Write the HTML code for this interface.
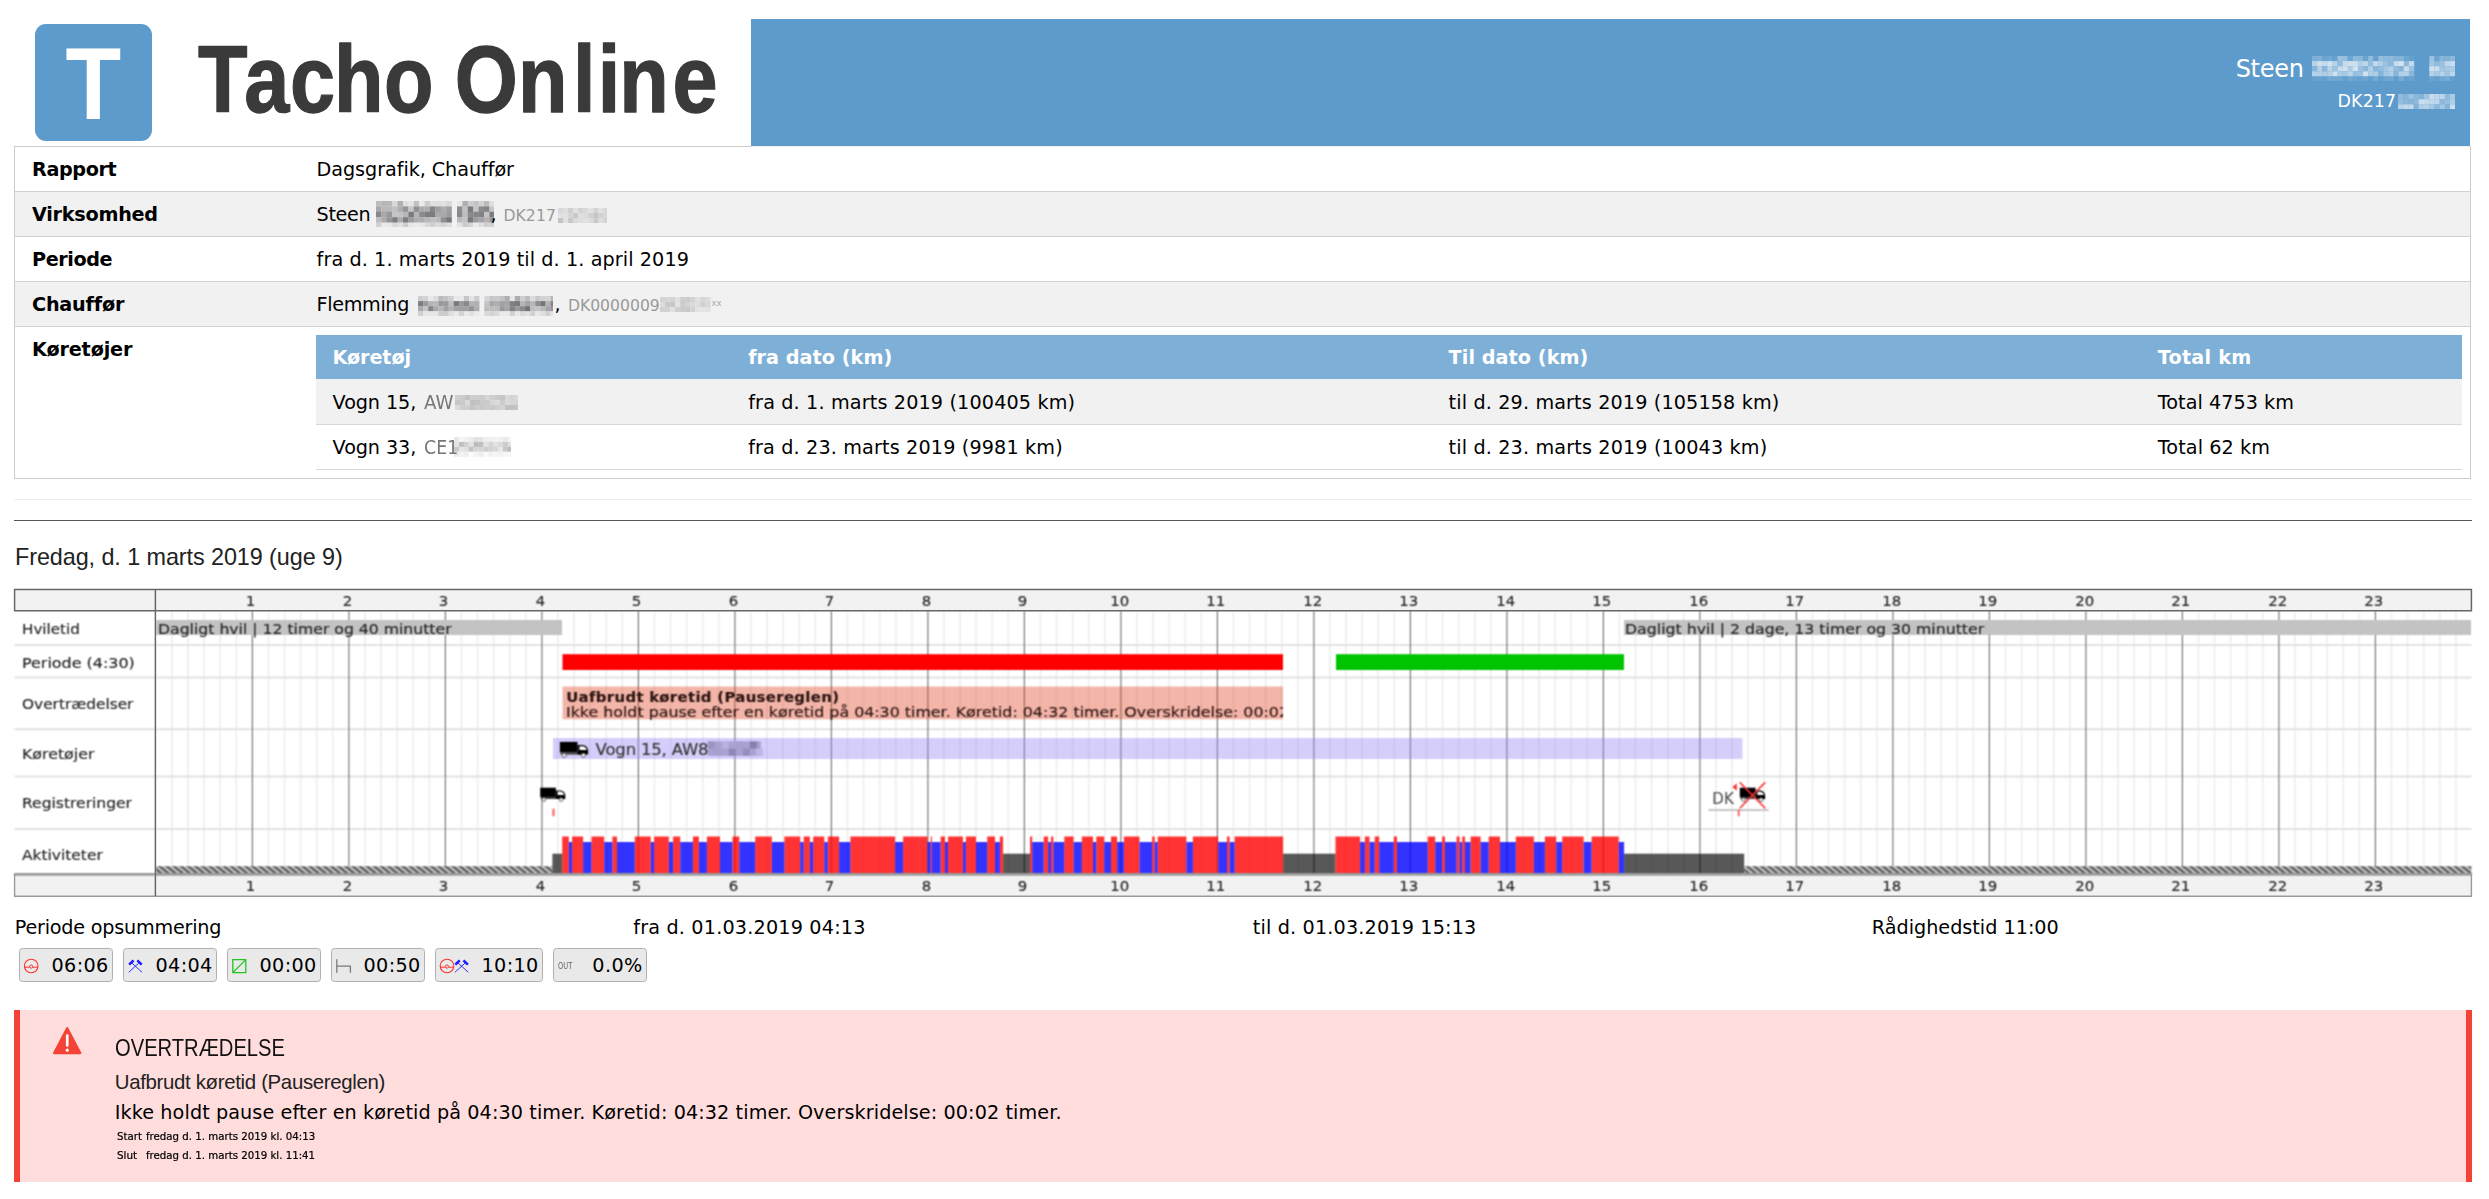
<!DOCTYPE html>
<html lang="da"><head><meta charset="utf-8"><title>Tacho Online – Dagsgrafik, Chauffør</title>
<style>
html,body{margin:0;padding:0;background:#fff}
body{width:2489px;height:1199px;position:relative;overflow:hidden;font-family:"DejaVu Sans","Liberation Sans",sans-serif}
body div,body svg{box-sizing:content-box}
i{display:block;font-style:normal}
</style></head><body>
<!-- ============ header ============ -->
<div style="position:absolute;left:35px;top:24px;width:117px;height:117px;border-radius:11px;background:#5c9bcc"></div>
<svg style="position:absolute;left:0;top:0" width="760" height="146" viewBox="0 0 760 146">
<text x="0" y="0" font-family="Liberation Sans, DejaVu Sans, sans-serif" font-weight="bold" font-size="101.6" fill="#fff" transform="translate(65.6 119.2) scale(0.897 1)">T</text>
<g font-family="Liberation Sans, DejaVu Sans, sans-serif" font-weight="bold" font-size="94.3" fill="#3a3a3a" stroke="#3a3a3a" stroke-width="1.3" stroke-linejoin="round">
<text transform="translate(0 111.6) scale(0.86 1)" x="230.2 284.0 337.2 388.4 446.5" y="0">Tacho</text>
<text transform="translate(0 111.6) scale(0.86 1)" x="528.8 602.3 666.3 695.1 720.2 782.1" y="0">Online</text>
</g></svg>
<div style="position:absolute;left:751px;top:19px;width:1719px;height:127px;background:#5c9bcc"></div>
<svg style="position:absolute;left:2311.5px;top:55.5px;filter:blur(0.5px)" width="143" height="25.5" viewBox="0 0 143 25.5"><rect x="0.0" y="0.0" width="5.3" height="5.3" fill="#7dafd6"/><rect x="5.1" y="0.0" width="5.3" height="5.3" fill="#82b2d8"/><rect x="10.2" y="0.0" width="5.3" height="5.3" fill="#6ba4d1"/><rect x="15.3" y="0.0" width="5.3" height="5.3" fill="#73a9d3"/><rect x="20.4" y="0.0" width="5.3" height="5.3" fill="#66a1cf"/><rect x="25.5" y="0.0" width="5.3" height="5.3" fill="#9cc2e0"/><rect x="30.6" y="0.0" width="5.3" height="5.3" fill="#96bede"/><rect x="35.7" y="0.0" width="5.3" height="5.3" fill="#6ba4d1"/><rect x="40.8" y="0.0" width="5.3" height="5.3" fill="#8db9db"/><rect x="45.9" y="0.0" width="5.3" height="5.3" fill="#89b6da"/><rect x="51.0" y="0.0" width="5.3" height="5.3" fill="#6ba4d1"/><rect x="56.1" y="0.0" width="5.3" height="5.3" fill="#92bcdd"/><rect x="61.2" y="0.0" width="5.3" height="5.3" fill="#67a1cf"/><rect x="66.3" y="0.0" width="5.3" height="5.3" fill="#97bfde"/><rect x="71.4" y="0.0" width="5.3" height="5.3" fill="#91bbdd"/><rect x="76.5" y="0.0" width="5.3" height="5.3" fill="#91bbdc"/><rect x="81.6" y="0.0" width="5.3" height="5.3" fill="#83b3d8"/><rect x="86.7" y="0.0" width="5.3" height="5.3" fill="#85b4d9"/><rect x="91.8" y="0.0" width="5.3" height="5.3" fill="#6ea6d2"/><rect x="96.9" y="0.0" width="5.3" height="5.3" fill="#64a0cf"/><rect x="117.3" y="0.0" width="5.3" height="5.3" fill="#9bc2e0"/><rect x="122.4" y="0.0" width="5.3" height="5.3" fill="#6ba4d1"/><rect x="127.5" y="0.0" width="5.3" height="5.3" fill="#88b6da"/><rect x="132.6" y="0.0" width="5.3" height="5.3" fill="#81b2d8"/><rect x="137.7" y="0.0" width="5.3" height="5.3" fill="#8bb8db"/><rect x="0.0" y="5.1" width="5.3" height="5.3" fill="#b9d4e9"/><rect x="5.1" y="5.1" width="5.3" height="5.3" fill="#cce0ef"/><rect x="10.2" y="5.1" width="5.3" height="5.3" fill="#c6dced"/><rect x="15.3" y="5.1" width="5.3" height="5.3" fill="#d1e3f1"/><rect x="20.4" y="5.1" width="5.3" height="5.3" fill="#b8d4e9"/><rect x="25.5" y="5.1" width="5.3" height="5.3" fill="#92bcdd"/><rect x="30.6" y="5.1" width="5.3" height="5.3" fill="#c7dced"/><rect x="35.7" y="5.1" width="5.3" height="5.3" fill="#cfe1f0"/><rect x="40.8" y="5.1" width="5.3" height="5.3" fill="#cadfee"/><rect x="45.9" y="5.1" width="5.3" height="5.3" fill="#b0cfe6"/><rect x="51.0" y="5.1" width="5.3" height="5.3" fill="#bcd6ea"/><rect x="56.1" y="5.1" width="5.3" height="5.3" fill="#95bede"/><rect x="61.2" y="5.1" width="5.3" height="5.3" fill="#c5dbed"/><rect x="66.3" y="5.1" width="5.3" height="5.3" fill="#b1cfe7"/><rect x="71.4" y="5.1" width="5.3" height="5.3" fill="#9bc2e0"/><rect x="76.5" y="5.1" width="5.3" height="5.3" fill="#8ab7da"/><rect x="81.6" y="5.1" width="5.3" height="5.3" fill="#c6dced"/><rect x="86.7" y="5.1" width="5.3" height="5.3" fill="#d1e3f0"/><rect x="91.8" y="5.1" width="5.3" height="5.3" fill="#8cb8db"/><rect x="96.9" y="5.1" width="5.3" height="5.3" fill="#c2daec"/><rect x="117.3" y="5.1" width="5.3" height="5.3" fill="#a4c7e3"/><rect x="122.4" y="5.1" width="5.3" height="5.3" fill="#91bbdc"/><rect x="127.5" y="5.1" width="5.3" height="5.3" fill="#9bc2e0"/><rect x="132.6" y="5.1" width="5.3" height="5.3" fill="#c0d8eb"/><rect x="137.7" y="5.1" width="5.3" height="5.3" fill="#c8ddee"/><rect x="0.0" y="10.2" width="5.3" height="5.3" fill="#88b6da"/><rect x="5.1" y="10.2" width="5.3" height="5.3" fill="#b4d1e8"/><rect x="10.2" y="10.2" width="5.3" height="5.3" fill="#89b6da"/><rect x="15.3" y="10.2" width="5.3" height="5.3" fill="#bcd6ea"/><rect x="20.4" y="10.2" width="5.3" height="5.3" fill="#9ec4e1"/><rect x="25.5" y="10.2" width="5.3" height="5.3" fill="#c8ddee"/><rect x="30.6" y="10.2" width="5.3" height="5.3" fill="#d0e2f0"/><rect x="35.7" y="10.2" width="5.3" height="5.3" fill="#accce5"/><rect x="40.8" y="10.2" width="5.3" height="5.3" fill="#d1e3f1"/><rect x="45.9" y="10.2" width="5.3" height="5.3" fill="#9dc3e0"/><rect x="51.0" y="10.2" width="5.3" height="5.3" fill="#8bb8db"/><rect x="56.1" y="10.2" width="5.3" height="5.3" fill="#b3d0e7"/><rect x="61.2" y="10.2" width="5.3" height="5.3" fill="#87b6da"/><rect x="66.3" y="10.2" width="5.3" height="5.3" fill="#94bdde"/><rect x="71.4" y="10.2" width="5.3" height="5.3" fill="#a4c7e3"/><rect x="76.5" y="10.2" width="5.3" height="5.3" fill="#b4d1e7"/><rect x="81.6" y="10.2" width="5.3" height="5.3" fill="#91bcdd"/><rect x="86.7" y="10.2" width="5.3" height="5.3" fill="#88b6da"/><rect x="91.8" y="10.2" width="5.3" height="5.3" fill="#c7ddee"/><rect x="96.9" y="10.2" width="5.3" height="5.3" fill="#9dc3e0"/><rect x="117.3" y="10.2" width="5.3" height="5.3" fill="#cee1f0"/><rect x="122.4" y="10.2" width="5.3" height="5.3" fill="#c9deee"/><rect x="127.5" y="10.2" width="5.3" height="5.3" fill="#a2c6e2"/><rect x="132.6" y="10.2" width="5.3" height="5.3" fill="#a8cae4"/><rect x="137.7" y="10.2" width="5.3" height="5.3" fill="#adcde5"/><rect x="0.0" y="15.3" width="5.3" height="5.3" fill="#b6d2e8"/><rect x="5.1" y="15.3" width="5.3" height="5.3" fill="#b3d0e7"/><rect x="10.2" y="15.3" width="5.3" height="5.3" fill="#b0cee6"/><rect x="15.3" y="15.3" width="5.3" height="5.3" fill="#b4d1e8"/><rect x="20.4" y="15.3" width="5.3" height="5.3" fill="#cde0ef"/><rect x="25.5" y="15.3" width="5.3" height="5.3" fill="#accce5"/><rect x="30.6" y="15.3" width="5.3" height="5.3" fill="#a6c8e3"/><rect x="35.7" y="15.3" width="5.3" height="5.3" fill="#bcd6ea"/><rect x="40.8" y="15.3" width="5.3" height="5.3" fill="#97bfdf"/><rect x="45.9" y="15.3" width="5.3" height="5.3" fill="#9cc2e0"/><rect x="51.0" y="15.3" width="5.3" height="5.3" fill="#d0e2f0"/><rect x="56.1" y="15.3" width="5.3" height="5.3" fill="#adcde5"/><rect x="61.2" y="15.3" width="5.3" height="5.3" fill="#afcee6"/><rect x="66.3" y="15.3" width="5.3" height="5.3" fill="#86b5d9"/><rect x="71.4" y="15.3" width="5.3" height="5.3" fill="#a5c8e3"/><rect x="76.5" y="15.3" width="5.3" height="5.3" fill="#b1cfe7"/><rect x="81.6" y="15.3" width="5.3" height="5.3" fill="#87b5d9"/><rect x="86.7" y="15.3" width="5.3" height="5.3" fill="#b4d1e8"/><rect x="91.8" y="15.3" width="5.3" height="5.3" fill="#b5d2e8"/><rect x="96.9" y="15.3" width="5.3" height="5.3" fill="#8ab7da"/><rect x="117.3" y="15.3" width="5.3" height="5.3" fill="#b5d2e8"/><rect x="122.4" y="15.3" width="5.3" height="5.3" fill="#a9cae4"/><rect x="127.5" y="15.3" width="5.3" height="5.3" fill="#b9d4e9"/><rect x="132.6" y="15.3" width="5.3" height="5.3" fill="#a0c5e1"/><rect x="137.7" y="15.3" width="5.3" height="5.3" fill="#bbd5ea"/><rect x="0.0" y="20.4" width="5.3" height="5.3" fill="#65a0cf"/><rect x="5.1" y="20.4" width="5.3" height="5.3" fill="#6aa3d0"/><rect x="10.2" y="20.4" width="5.3" height="5.3" fill="#66a1cf"/><rect x="15.3" y="20.4" width="5.3" height="5.3" fill="#73a9d3"/><rect x="20.4" y="20.4" width="5.3" height="5.3" fill="#70a7d2"/><rect x="25.5" y="20.4" width="5.3" height="5.3" fill="#6fa7d2"/><rect x="30.6" y="20.4" width="5.3" height="5.3" fill="#64a0ce"/><rect x="35.7" y="20.4" width="5.3" height="5.3" fill="#71a8d3"/><rect x="40.8" y="20.4" width="5.3" height="5.3" fill="#69a3d0"/><rect x="45.9" y="20.4" width="5.3" height="5.3" fill="#65a0cf"/><rect x="51.0" y="20.4" width="5.3" height="5.3" fill="#6da6d1"/><rect x="56.1" y="20.4" width="5.3" height="5.3" fill="#619ece"/><rect x="61.2" y="20.4" width="5.3" height="5.3" fill="#72a9d3"/><rect x="66.3" y="20.4" width="5.3" height="5.3" fill="#609ecd"/><rect x="71.4" y="20.4" width="5.3" height="5.3" fill="#70a7d2"/><rect x="76.5" y="20.4" width="5.3" height="5.3" fill="#72a9d3"/><rect x="81.6" y="20.4" width="5.3" height="5.3" fill="#619ece"/><rect x="86.7" y="20.4" width="5.3" height="5.3" fill="#77acd5"/><rect x="91.8" y="20.4" width="5.3" height="5.3" fill="#639fce"/><rect x="96.9" y="20.4" width="5.3" height="5.3" fill="#6ba4d1"/><rect x="117.3" y="20.4" width="5.3" height="5.3" fill="#6da5d1"/><rect x="122.4" y="20.4" width="5.3" height="5.3" fill="#65a1cf"/><rect x="127.5" y="20.4" width="5.3" height="5.3" fill="#6fa6d2"/><rect x="132.6" y="20.4" width="5.3" height="5.3" fill="#77acd4"/><rect x="137.7" y="20.4" width="5.3" height="5.3" fill="#629fce"/></svg>
<svg style="position:absolute;left:2397.5px;top:93.6px;filter:blur(0.5px)" width="57.5" height="15.6" viewBox="0 0 57.5 15.6"><rect x="0.0" y="0.0" width="5.4" height="5.4" fill="#91bcdd"/><rect x="5.2" y="0.0" width="5.4" height="5.4" fill="#86b5d9"/><rect x="10.4" y="0.0" width="5.4" height="5.4" fill="#9ec3e1"/><rect x="15.6" y="0.0" width="5.4" height="5.4" fill="#8bb8db"/><rect x="20.8" y="0.0" width="5.4" height="5.4" fill="#84b3d8"/><rect x="26.0" y="0.0" width="5.4" height="5.4" fill="#9ec4e1"/><rect x="31.2" y="0.0" width="5.4" height="5.4" fill="#c8ddee"/><rect x="36.4" y="0.0" width="5.4" height="5.4" fill="#bed7eb"/><rect x="41.6" y="0.0" width="5.4" height="5.4" fill="#bbd5ea"/><rect x="46.8" y="0.0" width="5.4" height="5.4" fill="#90bbdc"/><rect x="52.0" y="0.0" width="5.4" height="5.4" fill="#a9cae4"/><rect x="0.0" y="5.2" width="5.4" height="5.4" fill="#94bede"/><rect x="5.2" y="5.2" width="5.4" height="5.4" fill="#8cb8db"/><rect x="10.4" y="5.2" width="5.4" height="5.4" fill="#87b5d9"/><rect x="15.6" y="5.2" width="5.4" height="5.4" fill="#8fbbdc"/><rect x="20.8" y="5.2" width="5.4" height="5.4" fill="#c8ddee"/><rect x="26.0" y="5.2" width="5.4" height="5.4" fill="#c0d9eb"/><rect x="31.2" y="5.2" width="5.4" height="5.4" fill="#bfd8eb"/><rect x="36.4" y="5.2" width="5.4" height="5.4" fill="#bed7eb"/><rect x="41.6" y="5.2" width="5.4" height="5.4" fill="#8eb9dc"/><rect x="46.8" y="5.2" width="5.4" height="5.4" fill="#97bfde"/><rect x="52.0" y="5.2" width="5.4" height="5.4" fill="#b0cfe6"/><rect x="0.0" y="10.4" width="5.4" height="5.4" fill="#b9d4e9"/><rect x="5.2" y="10.4" width="5.4" height="5.4" fill="#c2daec"/><rect x="10.4" y="10.4" width="5.4" height="5.4" fill="#c5dbed"/><rect x="15.6" y="10.4" width="5.4" height="5.4" fill="#85b4d9"/><rect x="20.8" y="10.4" width="5.4" height="5.4" fill="#afcee6"/><rect x="26.0" y="10.4" width="5.4" height="5.4" fill="#b4d1e7"/><rect x="31.2" y="10.4" width="5.4" height="5.4" fill="#a7c9e3"/><rect x="36.4" y="10.4" width="5.4" height="5.4" fill="#8cb9db"/><rect x="41.6" y="10.4" width="5.4" height="5.4" fill="#a4c7e3"/><rect x="46.8" y="10.4" width="5.4" height="5.4" fill="#85b4d9"/><rect x="52.0" y="10.4" width="5.4" height="5.4" fill="#c9deee"/></svg>
<!-- ============ info table ============ -->
<div style="position:absolute;left:14px;top:146px;width:2455px;height:331px;border:1px solid #ccc;background:#fff"></div>
<div style="position:absolute;left:751px;top:146px;width:1719px;height:1px;background:#f4efec"></div>
<div style="position:absolute;left:15px;top:192px;width:2455px;height:44px;background:#f1f1f1"></div>
<div style="position:absolute;left:15px;top:282px;width:2455px;height:44px;background:#f1f1f1"></div>
<div style="position:absolute;left:15px;top:191px;width:2455px;height:1px;background:#d2d2d2"></div>
<div style="position:absolute;left:15px;top:236px;width:2455px;height:1px;background:#d2d2d2"></div>
<div style="position:absolute;left:15px;top:281px;width:2455px;height:1px;background:#d2d2d2"></div>
<div style="position:absolute;left:15px;top:326px;width:2455px;height:1px;background:#d2d2d2"></div>
<div style="position:absolute;left:316px;top:335px;width:2146px;height:44px;background:#7dafd7"></div>
<div style="position:absolute;left:316px;top:379px;width:2146px;height:45px;background:#f1f1f1;border-bottom:1px solid #d8d8d8"></div>
<div style="position:absolute;left:316px;top:425px;width:2146px;height:44px;background:#fff;border-bottom:1px solid #d8d8d8"></div>
<svg style="position:absolute;left:376px;top:201px;filter:blur(0.5px)" width="118" height="26" viewBox="0 0 118 26"><rect x="0.0" y="0.0" width="5.6" height="5.6" fill="#bebec0"/><rect x="5.4" y="0.0" width="5.6" height="5.6" fill="#b6b6b9"/><rect x="10.8" y="0.0" width="5.6" height="5.6" fill="#b9b9bb"/><rect x="16.2" y="0.0" width="5.6" height="5.6" fill="#d8d8d9"/><rect x="21.6" y="0.0" width="5.6" height="5.6" fill="#b0b0b3"/><rect x="27.0" y="0.0" width="5.6" height="5.6" fill="#dededf"/><rect x="32.4" y="0.0" width="5.6" height="5.6" fill="#e4e4e4"/><rect x="37.8" y="0.0" width="5.6" height="5.6" fill="#c1c1c4"/><rect x="43.2" y="0.0" width="5.6" height="5.6" fill="#eaeaea"/><rect x="48.6" y="0.0" width="5.6" height="5.6" fill="#cdcdcf"/><rect x="54.0" y="0.0" width="5.6" height="5.6" fill="#e0e0e1"/><rect x="59.4" y="0.0" width="5.6" height="5.6" fill="#dfdfe0"/><rect x="64.8" y="0.0" width="5.6" height="5.6" fill="#e2e2e2"/><rect x="70.2" y="0.0" width="5.6" height="5.6" fill="#d9d9da"/><rect x="81.0" y="0.0" width="5.6" height="5.6" fill="#e7e7e8"/><rect x="86.4" y="0.0" width="5.6" height="5.6" fill="#aeaeb1"/><rect x="91.8" y="0.0" width="5.6" height="5.6" fill="#cdcdce"/><rect x="97.2" y="0.0" width="5.6" height="5.6" fill="#c2c2c4"/><rect x="102.6" y="0.0" width="5.6" height="5.6" fill="#d0d0d2"/><rect x="108.0" y="0.0" width="5.6" height="5.6" fill="#bbbbbd"/><rect x="113.4" y="0.0" width="5.6" height="5.6" fill="#dededf"/><rect x="0.0" y="5.4" width="5.6" height="5.6" fill="#a9a9ac"/><rect x="5.4" y="5.4" width="5.6" height="5.6" fill="#b9b9bb"/><rect x="10.8" y="5.4" width="5.6" height="5.6" fill="#bababd"/><rect x="16.2" y="5.4" width="5.6" height="5.6" fill="#c1c1c3"/><rect x="21.6" y="5.4" width="5.6" height="5.6" fill="#aeaeb1"/><rect x="27.0" y="5.4" width="5.6" height="5.6" fill="#96969a"/><rect x="32.4" y="5.4" width="5.6" height="5.6" fill="#c6c6c8"/><rect x="37.8" y="5.4" width="5.6" height="5.6" fill="#909094"/><rect x="43.2" y="5.4" width="5.6" height="5.6" fill="#ababae"/><rect x="48.6" y="5.4" width="5.6" height="5.6" fill="#adadb0"/><rect x="54.0" y="5.4" width="5.6" height="5.6" fill="#848489"/><rect x="59.4" y="5.4" width="5.6" height="5.6" fill="#9f9fa3"/><rect x="64.8" y="5.4" width="5.6" height="5.6" fill="#adadb0"/><rect x="70.2" y="5.4" width="5.6" height="5.6" fill="#9f9fa3"/><rect x="81.0" y="5.4" width="5.6" height="5.6" fill="#8e8e92"/><rect x="86.4" y="5.4" width="5.6" height="5.6" fill="#c1c1c4"/><rect x="91.8" y="5.4" width="5.6" height="5.6" fill="#78787e"/><rect x="97.2" y="5.4" width="5.6" height="5.6" fill="#c4c4c6"/><rect x="102.6" y="5.4" width="5.6" height="5.6" fill="#8a8a8f"/><rect x="108.0" y="5.4" width="5.6" height="5.6" fill="#828287"/><rect x="113.4" y="5.4" width="5.6" height="5.6" fill="#c4c4c7"/><rect x="0.0" y="10.8" width="5.6" height="5.6" fill="#87878c"/><rect x="5.4" y="10.8" width="5.6" height="5.6" fill="#a9a9ac"/><rect x="10.8" y="10.8" width="5.6" height="5.6" fill="#98989c"/><rect x="16.2" y="10.8" width="5.6" height="5.6" fill="#c5c5c7"/><rect x="21.6" y="10.8" width="5.6" height="5.6" fill="#c2c2c4"/><rect x="27.0" y="10.8" width="5.6" height="5.6" fill="#b7b7ba"/><rect x="32.4" y="10.8" width="5.6" height="5.6" fill="#79797f"/><rect x="37.8" y="10.8" width="5.6" height="5.6" fill="#b6b6b9"/><rect x="43.2" y="10.8" width="5.6" height="5.6" fill="#89898e"/><rect x="48.6" y="10.8" width="5.6" height="5.6" fill="#7c7c81"/><rect x="54.0" y="10.8" width="5.6" height="5.6" fill="#7b7b80"/><rect x="59.4" y="10.8" width="5.6" height="5.6" fill="#aaaaae"/><rect x="64.8" y="10.8" width="5.6" height="5.6" fill="#aaaaad"/><rect x="70.2" y="10.8" width="5.6" height="5.6" fill="#9c9ca0"/><rect x="81.0" y="10.8" width="5.6" height="5.6" fill="#88888d"/><rect x="86.4" y="10.8" width="5.6" height="5.6" fill="#bdbdc0"/><rect x="91.8" y="10.8" width="5.6" height="5.6" fill="#8a8a8f"/><rect x="97.2" y="10.8" width="5.6" height="5.6" fill="#86868b"/><rect x="102.6" y="10.8" width="5.6" height="5.6" fill="#818186"/><rect x="108.0" y="10.8" width="5.6" height="5.6" fill="#c3c3c5"/><rect x="113.4" y="10.8" width="5.6" height="5.6" fill="#7a7a80"/><rect x="0.0" y="16.2" width="5.6" height="5.6" fill="#bfbfc1"/><rect x="5.4" y="16.2" width="5.6" height="5.6" fill="#ababae"/><rect x="10.8" y="16.2" width="5.6" height="5.6" fill="#959599"/><rect x="16.2" y="16.2" width="5.6" height="5.6" fill="#7c7c82"/><rect x="21.6" y="16.2" width="5.6" height="5.6" fill="#ababae"/><rect x="27.0" y="16.2" width="5.6" height="5.6" fill="#7c7c81"/><rect x="32.4" y="16.2" width="5.6" height="5.6" fill="#9a9a9e"/><rect x="37.8" y="16.2" width="5.6" height="5.6" fill="#adadb0"/><rect x="43.2" y="16.2" width="5.6" height="5.6" fill="#adadb0"/><rect x="48.6" y="16.2" width="5.6" height="5.6" fill="#b8b8ba"/><rect x="54.0" y="16.2" width="5.6" height="5.6" fill="#c0c0c2"/><rect x="59.4" y="16.2" width="5.6" height="5.6" fill="#bababd"/><rect x="64.8" y="16.2" width="5.6" height="5.6" fill="#8f8f93"/><rect x="70.2" y="16.2" width="5.6" height="5.6" fill="#76767c"/><rect x="81.0" y="16.2" width="5.6" height="5.6" fill="#b9b9bc"/><rect x="86.4" y="16.2" width="5.6" height="5.6" fill="#c2c2c4"/><rect x="91.8" y="16.2" width="5.6" height="5.6" fill="#77777d"/><rect x="97.2" y="16.2" width="5.6" height="5.6" fill="#9b9b9f"/><rect x="102.6" y="16.2" width="5.6" height="5.6" fill="#a5a5a9"/><rect x="108.0" y="16.2" width="5.6" height="5.6" fill="#b3b3b6"/><rect x="113.4" y="16.2" width="5.6" height="5.6" fill="#96969b"/><rect x="0.0" y="21.6" width="5.6" height="5.6" fill="#d0d0d2"/><rect x="5.4" y="21.6" width="5.6" height="5.6" fill="#eaeaea"/><rect x="10.8" y="21.6" width="5.6" height="5.6" fill="#e7e7e7"/><rect x="16.2" y="21.6" width="5.6" height="5.6" fill="#d8d8d9"/><rect x="21.6" y="21.6" width="5.6" height="5.6" fill="#e1e1e2"/><rect x="27.0" y="21.6" width="5.6" height="5.6" fill="#cdcdcf"/><rect x="32.4" y="21.6" width="5.6" height="5.6" fill="#e7e7e8"/><rect x="37.8" y="21.6" width="5.6" height="5.6" fill="#eaeaea"/><rect x="43.2" y="21.6" width="5.6" height="5.6" fill="#e7e7e8"/><rect x="48.6" y="21.6" width="5.6" height="5.6" fill="#d9d9da"/><rect x="54.0" y="21.6" width="5.6" height="5.6" fill="#d0d0d1"/><rect x="59.4" y="21.6" width="5.6" height="5.6" fill="#d9d9da"/><rect x="64.8" y="21.6" width="5.6" height="5.6" fill="#d3d3d4"/><rect x="70.2" y="21.6" width="5.6" height="5.6" fill="#ddddde"/><rect x="81.0" y="21.6" width="5.6" height="5.6" fill="#e1e1e1"/><rect x="86.4" y="21.6" width="5.6" height="5.6" fill="#ccccce"/><rect x="91.8" y="21.6" width="5.6" height="5.6" fill="#d5d5d6"/><rect x="97.2" y="21.6" width="5.6" height="5.6" fill="#ebebeb"/><rect x="102.6" y="21.6" width="5.6" height="5.6" fill="#dedede"/><rect x="108.0" y="21.6" width="5.6" height="5.6" fill="#cfcfd1"/><rect x="113.4" y="21.6" width="5.6" height="5.6" fill="#d1d1d3"/></svg>
<svg style="position:absolute;left:557.6px;top:207.8px;filter:blur(0.5px)" width="49.4" height="15.2" viewBox="0 0 49.4 15.2"><rect x="0.0" y="0.0" width="5.2" height="5.2" fill="#d9d9d9"/><rect x="5.0" y="0.0" width="5.2" height="5.2" fill="#dfdfdf"/><rect x="10.1" y="0.0" width="5.2" height="5.2" fill="#cfcfcf"/><rect x="15.1" y="0.0" width="5.2" height="5.2" fill="#e1e1e1"/><rect x="20.2" y="0.0" width="5.2" height="5.2" fill="#d2d2d2"/><rect x="25.2" y="0.0" width="5.2" height="5.2" fill="#d8d8d8"/><rect x="30.3" y="0.0" width="5.2" height="5.2" fill="#e2e2e2"/><rect x="35.4" y="0.0" width="5.2" height="5.2" fill="#d3d3d3"/><rect x="40.4" y="0.0" width="5.2" height="5.2" fill="#e2e2e2"/><rect x="45.4" y="0.0" width="5.2" height="5.2" fill="#d6d6d6"/><rect x="0.0" y="5.0" width="5.2" height="5.2" fill="#e1e1e1"/><rect x="5.0" y="5.0" width="5.2" height="5.2" fill="#e0e0e0"/><rect x="10.1" y="5.0" width="5.2" height="5.2" fill="#d6d6d6"/><rect x="15.1" y="5.0" width="5.2" height="5.2" fill="#c9c9c9"/><rect x="20.2" y="5.0" width="5.2" height="5.2" fill="#dfdfdf"/><rect x="25.2" y="5.0" width="5.2" height="5.2" fill="#dcdcdc"/><rect x="30.3" y="5.0" width="5.2" height="5.2" fill="#cfcfcf"/><rect x="35.4" y="5.0" width="5.2" height="5.2" fill="#c5c5c5"/><rect x="40.4" y="5.0" width="5.2" height="5.2" fill="#d1d1d1"/><rect x="45.4" y="5.0" width="5.2" height="5.2" fill="#d7d7d7"/><rect x="0.0" y="10.1" width="5.2" height="5.2" fill="#c4c4c4"/><rect x="5.0" y="10.1" width="5.2" height="5.2" fill="#e2e2e2"/><rect x="10.1" y="10.1" width="5.2" height="5.2" fill="#c8c8c8"/><rect x="15.1" y="10.1" width="5.2" height="5.2" fill="#dadada"/><rect x="20.2" y="10.1" width="5.2" height="5.2" fill="#dfdfdf"/><rect x="25.2" y="10.1" width="5.2" height="5.2" fill="#e0e0e0"/><rect x="30.3" y="10.1" width="5.2" height="5.2" fill="#dadada"/><rect x="35.4" y="10.1" width="5.2" height="5.2" fill="#c9c9c9"/><rect x="40.4" y="10.1" width="5.2" height="5.2" fill="#dedede"/><rect x="45.4" y="10.1" width="5.2" height="5.2" fill="#d1d1d1"/><rect x="0.0" y="15.1" width="5.2" height="5.2" fill="#cfcfcf"/><rect x="5.0" y="15.1" width="5.2" height="5.2" fill="#d7d7d7"/><rect x="10.1" y="15.1" width="5.2" height="5.2" fill="#d2d2d2"/><rect x="15.1" y="15.1" width="5.2" height="5.2" fill="#e1e1e1"/><rect x="20.2" y="15.1" width="5.2" height="5.2" fill="#e1e1e1"/><rect x="25.2" y="15.1" width="5.2" height="5.2" fill="#dddddd"/><rect x="30.3" y="15.1" width="5.2" height="5.2" fill="#cecece"/><rect x="35.4" y="15.1" width="5.2" height="5.2" fill="#d6d6d6"/><rect x="40.4" y="15.1" width="5.2" height="5.2" fill="#d9d9d9"/><rect x="45.4" y="15.1" width="5.2" height="5.2" fill="#d1d1d1"/></svg>
<svg style="position:absolute;left:418px;top:295.6px;filter:blur(0.5px)" width="135.4" height="20.4" viewBox="0 0 135.4 20.4"><rect x="0.0" y="0.0" width="5.3" height="5.3" fill="#ceced0"/><rect x="5.1" y="0.0" width="5.3" height="5.3" fill="#d3d3d4"/><rect x="10.2" y="0.0" width="5.3" height="5.3" fill="#e8e8e9"/><rect x="15.3" y="0.0" width="5.3" height="5.3" fill="#dcdcdd"/><rect x="20.4" y="0.0" width="5.3" height="5.3" fill="#bbbbbd"/><rect x="25.5" y="0.0" width="5.3" height="5.3" fill="#c4c4c6"/><rect x="30.6" y="0.0" width="5.3" height="5.3" fill="#cfcfd1"/><rect x="35.7" y="0.0" width="5.3" height="5.3" fill="#e8e8e9"/><rect x="40.8" y="0.0" width="5.3" height="5.3" fill="#e9e9ea"/><rect x="45.9" y="0.0" width="5.3" height="5.3" fill="#c6c6c8"/><rect x="51.0" y="0.0" width="5.3" height="5.3" fill="#e4e4e5"/><rect x="56.1" y="0.0" width="5.3" height="5.3" fill="#ccccce"/><rect x="66.3" y="0.0" width="5.3" height="5.3" fill="#d5d5d7"/><rect x="71.4" y="0.0" width="5.3" height="5.3" fill="#c7c7c9"/><rect x="76.5" y="0.0" width="5.3" height="5.3" fill="#c9c9cb"/><rect x="81.6" y="0.0" width="5.3" height="5.3" fill="#c1c1c4"/><rect x="86.7" y="0.0" width="5.3" height="5.3" fill="#afafb2"/><rect x="91.8" y="0.0" width="5.3" height="5.3" fill="#e8e8e8"/><rect x="96.9" y="0.0" width="5.3" height="5.3" fill="#adadb0"/><rect x="102.0" y="0.0" width="5.3" height="5.3" fill="#cfcfd1"/><rect x="107.1" y="0.0" width="5.3" height="5.3" fill="#bebec0"/><rect x="112.2" y="0.0" width="5.3" height="5.3" fill="#ddddde"/><rect x="117.3" y="0.0" width="5.3" height="5.3" fill="#c8c8ca"/><rect x="122.4" y="0.0" width="5.3" height="5.3" fill="#d2d2d4"/><rect x="127.5" y="0.0" width="5.3" height="5.3" fill="#d4d4d5"/><rect x="132.6" y="0.0" width="5.3" height="5.3" fill="#b8b8bb"/><rect x="0.0" y="5.1" width="5.3" height="5.3" fill="#7e7e83"/><rect x="5.1" y="5.1" width="5.3" height="5.3" fill="#9a9a9e"/><rect x="10.2" y="5.1" width="5.3" height="5.3" fill="#b4b4b7"/><rect x="15.3" y="5.1" width="5.3" height="5.3" fill="#b8b8ba"/><rect x="20.4" y="5.1" width="5.3" height="5.3" fill="#98989c"/><rect x="25.5" y="5.1" width="5.3" height="5.3" fill="#9a9a9e"/><rect x="30.6" y="5.1" width="5.3" height="5.3" fill="#bebec1"/><rect x="35.7" y="5.1" width="5.3" height="5.3" fill="#79797e"/><rect x="40.8" y="5.1" width="5.3" height="5.3" fill="#9a9a9e"/><rect x="45.9" y="5.1" width="5.3" height="5.3" fill="#8a8a8e"/><rect x="51.0" y="5.1" width="5.3" height="5.3" fill="#b2b2b5"/><rect x="56.1" y="5.1" width="5.3" height="5.3" fill="#b0b0b3"/><rect x="66.3" y="5.1" width="5.3" height="5.3" fill="#c3c3c5"/><rect x="71.4" y="5.1" width="5.3" height="5.3" fill="#a7a7ab"/><rect x="76.5" y="5.1" width="5.3" height="5.3" fill="#aeaeb1"/><rect x="81.6" y="5.1" width="5.3" height="5.3" fill="#a1a1a5"/><rect x="86.7" y="5.1" width="5.3" height="5.3" fill="#a5a5a8"/><rect x="91.8" y="5.1" width="5.3" height="5.3" fill="#7f7f84"/><rect x="96.9" y="5.1" width="5.3" height="5.3" fill="#7a7a7f"/><rect x="102.0" y="5.1" width="5.3" height="5.3" fill="#b6b6b8"/><rect x="107.1" y="5.1" width="5.3" height="5.3" fill="#a3a3a7"/><rect x="112.2" y="5.1" width="5.3" height="5.3" fill="#b6b6b9"/><rect x="117.3" y="5.1" width="5.3" height="5.3" fill="#8d8d92"/><rect x="122.4" y="5.1" width="5.3" height="5.3" fill="#737379"/><rect x="127.5" y="5.1" width="5.3" height="5.3" fill="#b3b3b6"/><rect x="132.6" y="5.1" width="5.3" height="5.3" fill="#848489"/><rect x="0.0" y="10.2" width="5.3" height="5.3" fill="#ababae"/><rect x="5.1" y="10.2" width="5.3" height="5.3" fill="#c3c3c5"/><rect x="10.2" y="10.2" width="5.3" height="5.3" fill="#848489"/><rect x="15.3" y="10.2" width="5.3" height="5.3" fill="#a8a8ab"/><rect x="20.4" y="10.2" width="5.3" height="5.3" fill="#b6b6b9"/><rect x="25.5" y="10.2" width="5.3" height="5.3" fill="#a0a0a4"/><rect x="30.6" y="10.2" width="5.3" height="5.3" fill="#b1b1b4"/><rect x="35.7" y="10.2" width="5.3" height="5.3" fill="#a2a2a6"/><rect x="40.8" y="10.2" width="5.3" height="5.3" fill="#9f9fa3"/><rect x="45.9" y="10.2" width="5.3" height="5.3" fill="#a1a1a5"/><rect x="51.0" y="10.2" width="5.3" height="5.3" fill="#939397"/><rect x="56.1" y="10.2" width="5.3" height="5.3" fill="#acacaf"/><rect x="66.3" y="10.2" width="5.3" height="5.3" fill="#bcbcbf"/><rect x="71.4" y="10.2" width="5.3" height="5.3" fill="#bdbdbf"/><rect x="76.5" y="10.2" width="5.3" height="5.3" fill="#bbbbbe"/><rect x="81.6" y="10.2" width="5.3" height="5.3" fill="#99999d"/><rect x="86.7" y="10.2" width="5.3" height="5.3" fill="#a6a6aa"/><rect x="91.8" y="10.2" width="5.3" height="5.3" fill="#818186"/><rect x="96.9" y="10.2" width="5.3" height="5.3" fill="#9a9a9e"/><rect x="102.0" y="10.2" width="5.3" height="5.3" fill="#89898e"/><rect x="107.1" y="10.2" width="5.3" height="5.3" fill="#727278"/><rect x="112.2" y="10.2" width="5.3" height="5.3" fill="#bfbfc1"/><rect x="117.3" y="10.2" width="5.3" height="5.3" fill="#c3c3c5"/><rect x="122.4" y="10.2" width="5.3" height="5.3" fill="#b8b8bb"/><rect x="127.5" y="10.2" width="5.3" height="5.3" fill="#a4a4a8"/><rect x="132.6" y="10.2" width="5.3" height="5.3" fill="#949499"/><rect x="0.0" y="15.3" width="5.3" height="5.3" fill="#d1d1d2"/><rect x="5.1" y="15.3" width="5.3" height="5.3" fill="#e6e6e6"/><rect x="10.2" y="15.3" width="5.3" height="5.3" fill="#e7e7e7"/><rect x="15.3" y="15.3" width="5.3" height="5.3" fill="#e6e6e7"/><rect x="20.4" y="15.3" width="5.3" height="5.3" fill="#cbcbcd"/><rect x="25.5" y="15.3" width="5.3" height="5.3" fill="#cbcbcd"/><rect x="30.6" y="15.3" width="5.3" height="5.3" fill="#dfdfe0"/><rect x="35.7" y="15.3" width="5.3" height="5.3" fill="#eaeaea"/><rect x="40.8" y="15.3" width="5.3" height="5.3" fill="#d4d4d6"/><rect x="45.9" y="15.3" width="5.3" height="5.3" fill="#e9e9ea"/><rect x="51.0" y="15.3" width="5.3" height="5.3" fill="#e0e0e1"/><rect x="56.1" y="15.3" width="5.3" height="5.3" fill="#eaeaea"/><rect x="66.3" y="15.3" width="5.3" height="5.3" fill="#d9d9da"/><rect x="71.4" y="15.3" width="5.3" height="5.3" fill="#d2d2d3"/><rect x="76.5" y="15.3" width="5.3" height="5.3" fill="#dadadb"/><rect x="81.6" y="15.3" width="5.3" height="5.3" fill="#ebebec"/><rect x="86.7" y="15.3" width="5.3" height="5.3" fill="#eaeaea"/><rect x="91.8" y="15.3" width="5.3" height="5.3" fill="#d1d1d3"/><rect x="96.9" y="15.3" width="5.3" height="5.3" fill="#e8e8e9"/><rect x="102.0" y="15.3" width="5.3" height="5.3" fill="#dadadb"/><rect x="107.1" y="15.3" width="5.3" height="5.3" fill="#e1e1e2"/><rect x="112.2" y="15.3" width="5.3" height="5.3" fill="#d1d1d2"/><rect x="117.3" y="15.3" width="5.3" height="5.3" fill="#e8e8e8"/><rect x="122.4" y="15.3" width="5.3" height="5.3" fill="#dededf"/><rect x="127.5" y="15.3" width="5.3" height="5.3" fill="#d1d1d2"/><rect x="132.6" y="15.3" width="5.3" height="5.3" fill="#e3e3e4"/></svg>
<svg style="position:absolute;left:660.4px;top:296.8px;filter:blur(0.5px)" width="50.8" height="15.2" viewBox="0 0 50.8 15.2"><rect x="0.0" y="0.0" width="5.2" height="5.2" fill="#d4d4d4"/><rect x="5.0" y="0.0" width="5.2" height="5.2" fill="#d8d8d8"/><rect x="10.1" y="0.0" width="5.2" height="5.2" fill="#d4d4d4"/><rect x="15.1" y="0.0" width="5.2" height="5.2" fill="#dfdfdf"/><rect x="20.2" y="0.0" width="5.2" height="5.2" fill="#cdcdcd"/><rect x="25.2" y="0.0" width="5.2" height="5.2" fill="#cdcdcd"/><rect x="30.3" y="0.0" width="5.2" height="5.2" fill="#d2d2d2"/><rect x="35.4" y="0.0" width="5.2" height="5.2" fill="#e0e0e0"/><rect x="40.4" y="0.0" width="5.2" height="5.2" fill="#d6d6d6"/><rect x="45.4" y="0.0" width="5.2" height="5.2" fill="#dbdbdb"/><rect x="0.0" y="5.0" width="5.2" height="5.2" fill="#dedede"/><rect x="5.0" y="5.0" width="5.2" height="5.2" fill="#c9c9c9"/><rect x="10.1" y="5.0" width="5.2" height="5.2" fill="#c8c8c8"/><rect x="15.1" y="5.0" width="5.2" height="5.2" fill="#e3e3e3"/><rect x="20.2" y="5.0" width="5.2" height="5.2" fill="#cccccc"/><rect x="25.2" y="5.0" width="5.2" height="5.2" fill="#d3d3d3"/><rect x="30.3" y="5.0" width="5.2" height="5.2" fill="#dadada"/><rect x="35.4" y="5.0" width="5.2" height="5.2" fill="#dddddd"/><rect x="40.4" y="5.0" width="5.2" height="5.2" fill="#d1d1d1"/><rect x="45.4" y="5.0" width="5.2" height="5.2" fill="#d8d8d8"/><rect x="0.0" y="10.1" width="5.2" height="5.2" fill="#d1d1d1"/><rect x="5.0" y="10.1" width="5.2" height="5.2" fill="#d2d2d2"/><rect x="10.1" y="10.1" width="5.2" height="5.2" fill="#e1e1e1"/><rect x="15.1" y="10.1" width="5.2" height="5.2" fill="#cfcfcf"/><rect x="20.2" y="10.1" width="5.2" height="5.2" fill="#c9c9c9"/><rect x="25.2" y="10.1" width="5.2" height="5.2" fill="#c9c9c9"/><rect x="30.3" y="10.1" width="5.2" height="5.2" fill="#d3d3d3"/><rect x="35.4" y="10.1" width="5.2" height="5.2" fill="#e3e3e3"/><rect x="40.4" y="10.1" width="5.2" height="5.2" fill="#e5e5e5"/><rect x="45.4" y="10.1" width="5.2" height="5.2" fill="#e1e1e1"/><rect x="0.0" y="15.1" width="5.2" height="5.2" fill="#cacaca"/><rect x="5.0" y="15.1" width="5.2" height="5.2" fill="#dcdcdc"/><rect x="10.1" y="15.1" width="5.2" height="5.2" fill="#dadada"/><rect x="15.1" y="15.1" width="5.2" height="5.2" fill="#cbcbcb"/><rect x="20.2" y="15.1" width="5.2" height="5.2" fill="#dcdcdc"/><rect x="25.2" y="15.1" width="5.2" height="5.2" fill="#d5d5d5"/><rect x="30.3" y="15.1" width="5.2" height="5.2" fill="#d8d8d8"/><rect x="35.4" y="15.1" width="5.2" height="5.2" fill="#e3e3e3"/><rect x="40.4" y="15.1" width="5.2" height="5.2" fill="#d4d4d4"/><rect x="45.4" y="15.1" width="5.2" height="5.2" fill="#cdcdcd"/></svg>
<svg style="position:absolute;left:455px;top:394.8px;filter:blur(0.5px)" width="62.5" height="15" viewBox="0 0 62.5 15"><rect x="0.0" y="0.0" width="5.2" height="5.2" fill="#cfcfcf"/><rect x="5.0" y="0.0" width="5.2" height="5.2" fill="#cccccc"/><rect x="10.0" y="0.0" width="5.2" height="5.2" fill="#c3c3c3"/><rect x="15.0" y="0.0" width="5.2" height="5.2" fill="#cfcfcf"/><rect x="20.0" y="0.0" width="5.2" height="5.2" fill="#cecece"/><rect x="25.0" y="0.0" width="5.2" height="5.2" fill="#cccccc"/><rect x="30.0" y="0.0" width="5.2" height="5.2" fill="#d6d6d6"/><rect x="35.0" y="0.0" width="5.2" height="5.2" fill="#cecece"/><rect x="40.0" y="0.0" width="5.2" height="5.2" fill="#cacaca"/><rect x="45.0" y="0.0" width="5.2" height="5.2" fill="#c6c6c6"/><rect x="50.0" y="0.0" width="5.2" height="5.2" fill="#d9d9d9"/><rect x="55.0" y="0.0" width="5.2" height="5.2" fill="#d3d3d3"/><rect x="60.0" y="0.0" width="5.2" height="5.2" fill="#d9d9d9"/><rect x="0.0" y="5.0" width="5.2" height="5.2" fill="#c6c6c6"/><rect x="5.0" y="5.0" width="5.2" height="5.2" fill="#c9c9c9"/><rect x="10.0" y="5.0" width="5.2" height="5.2" fill="#dadada"/><rect x="15.0" y="5.0" width="5.2" height="5.2" fill="#c1c1c1"/><rect x="20.0" y="5.0" width="5.2" height="5.2" fill="#c2c2c2"/><rect x="25.0" y="5.0" width="5.2" height="5.2" fill="#cacaca"/><rect x="30.0" y="5.0" width="5.2" height="5.2" fill="#cbcbcb"/><rect x="35.0" y="5.0" width="5.2" height="5.2" fill="#d7d7d7"/><rect x="40.0" y="5.0" width="5.2" height="5.2" fill="#dbdbdb"/><rect x="45.0" y="5.0" width="5.2" height="5.2" fill="#cdcdcd"/><rect x="50.0" y="5.0" width="5.2" height="5.2" fill="#dadada"/><rect x="55.0" y="5.0" width="5.2" height="5.2" fill="#d6d6d6"/><rect x="60.0" y="5.0" width="5.2" height="5.2" fill="#d5d5d5"/><rect x="0.0" y="10.0" width="5.2" height="5.2" fill="#dadada"/><rect x="5.0" y="10.0" width="5.2" height="5.2" fill="#cfcfcf"/><rect x="10.0" y="10.0" width="5.2" height="5.2" fill="#cfcfcf"/><rect x="15.0" y="10.0" width="5.2" height="5.2" fill="#c5c5c5"/><rect x="20.0" y="10.0" width="5.2" height="5.2" fill="#cdcdcd"/><rect x="25.0" y="10.0" width="5.2" height="5.2" fill="#cacaca"/><rect x="30.0" y="10.0" width="5.2" height="5.2" fill="#cecece"/><rect x="35.0" y="10.0" width="5.2" height="5.2" fill="#cacaca"/><rect x="40.0" y="10.0" width="5.2" height="5.2" fill="#cfcfcf"/><rect x="45.0" y="10.0" width="5.2" height="5.2" fill="#d4d4d4"/><rect x="50.0" y="10.0" width="5.2" height="5.2" fill="#c1c1c1"/><rect x="55.0" y="10.0" width="5.2" height="5.2" fill="#c1c1c1"/><rect x="60.0" y="10.0" width="5.2" height="5.2" fill="#c5c5c5"/></svg>
<svg style="position:absolute;left:453.5px;top:437.2px;filter:blur(0.5px)" width="57.5" height="19.6" viewBox="0 0 57.5 19.6"><rect x="0.0" y="0.0" width="5.1" height="5.1" fill="#e7e7e7"/><rect x="4.9" y="0.0" width="5.1" height="5.1" fill="#f6f6f6"/><rect x="9.8" y="0.0" width="5.1" height="5.1" fill="#f2f2f2"/><rect x="14.7" y="0.0" width="5.1" height="5.1" fill="#ebebeb"/><rect x="19.6" y="0.0" width="5.1" height="5.1" fill="#e1e1e1"/><rect x="24.5" y="0.0" width="5.1" height="5.1" fill="#e5e5e5"/><rect x="29.4" y="0.0" width="5.1" height="5.1" fill="#eeeeee"/><rect x="34.3" y="0.0" width="5.1" height="5.1" fill="#eeeeee"/><rect x="39.2" y="0.0" width="5.1" height="5.1" fill="#f1f1f1"/><rect x="44.1" y="0.0" width="5.1" height="5.1" fill="#f0f0f0"/><rect x="49.0" y="0.0" width="5.1" height="5.1" fill="#eaeaea"/><rect x="53.9" y="0.0" width="5.1" height="5.1" fill="#f5f5f5"/><rect x="0.0" y="4.9" width="5.1" height="5.1" fill="#e5e5e5"/><rect x="4.9" y="4.9" width="5.1" height="5.1" fill="#bfbfbf"/><rect x="9.8" y="4.9" width="5.1" height="5.1" fill="#d1d1d1"/><rect x="14.7" y="4.9" width="5.1" height="5.1" fill="#e3e3e3"/><rect x="19.6" y="4.9" width="5.1" height="5.1" fill="#bcbcbc"/><rect x="24.5" y="4.9" width="5.1" height="5.1" fill="#bebebe"/><rect x="29.4" y="4.9" width="5.1" height="5.1" fill="#e2e2e2"/><rect x="34.3" y="4.9" width="5.1" height="5.1" fill="#d5d5d5"/><rect x="39.2" y="4.9" width="5.1" height="5.1" fill="#e1e1e1"/><rect x="44.1" y="4.9" width="5.1" height="5.1" fill="#dadada"/><rect x="49.0" y="4.9" width="5.1" height="5.1" fill="#cccccc"/><rect x="53.9" y="4.9" width="5.1" height="5.1" fill="#e0e0e0"/><rect x="0.0" y="9.8" width="5.1" height="5.1" fill="#c9c9c9"/><rect x="4.9" y="9.8" width="5.1" height="5.1" fill="#e5e5e5"/><rect x="9.8" y="9.8" width="5.1" height="5.1" fill="#e0e0e0"/><rect x="14.7" y="9.8" width="5.1" height="5.1" fill="#c4c4c4"/><rect x="19.6" y="9.8" width="5.1" height="5.1" fill="#d6d6d6"/><rect x="24.5" y="9.8" width="5.1" height="5.1" fill="#d5d5d5"/><rect x="29.4" y="9.8" width="5.1" height="5.1" fill="#cdcdcd"/><rect x="34.3" y="9.8" width="5.1" height="5.1" fill="#d2d2d2"/><rect x="39.2" y="9.8" width="5.1" height="5.1" fill="#d7d7d7"/><rect x="44.1" y="9.8" width="5.1" height="5.1" fill="#e6e6e6"/><rect x="49.0" y="9.8" width="5.1" height="5.1" fill="#c8c8c8"/><rect x="53.9" y="9.8" width="5.1" height="5.1" fill="#bdbdbd"/><rect x="0.0" y="14.7" width="5.1" height="5.1" fill="#ebebeb"/><rect x="4.9" y="14.7" width="5.1" height="5.1" fill="#f3f3f3"/><rect x="9.8" y="14.7" width="5.1" height="5.1" fill="#efefef"/><rect x="14.7" y="14.7" width="5.1" height="5.1" fill="#fcfcfc"/><rect x="19.6" y="14.7" width="5.1" height="5.1" fill="#f3f3f3"/><rect x="24.5" y="14.7" width="5.1" height="5.1" fill="#ededed"/><rect x="29.4" y="14.7" width="5.1" height="5.1" fill="#f8f8f8"/><rect x="34.3" y="14.7" width="5.1" height="5.1" fill="#f2f2f2"/><rect x="39.2" y="14.7" width="5.1" height="5.1" fill="#f5f5f5"/><rect x="44.1" y="14.7" width="5.1" height="5.1" fill="#f3f3f3"/><rect x="49.0" y="14.7" width="5.1" height="5.1" fill="#f7f7f7"/><rect x="53.9" y="14.7" width="5.1" height="5.1" fill="#f6f6f6"/></svg>
<div style="position:absolute;left:14px;top:499px;width:2458px;height:1px;background:#ededed"></div>
<div style="position:absolute;left:14px;top:520px;width:2458px;height:1px;background:#555"></div>
<!-- ============ chart ============ -->
<svg width="0" height="0" style="position:absolute"><defs><filter id="soft" x="0" y="0" width="100%" height="100%" color-interpolation-filters="sRGB"><feConvolveMatrix order="3" kernelMatrix="1 2 1 2 4 2 1 2 1" divisor="16" edgeMode="duplicate" preserveAlpha="false"/></filter></defs></svg>
<div style="position:absolute;left:0;top:0;width:2489px;height:1199px;filter:url(#soft);-webkit-text-stroke:0.15px currentColor">
<svg style="position:absolute;left:0;top:585px" width="2489" height="315" viewBox="0 585 2489 315">
<rect x="14.6" y="589.6" width="2456.8" height="21.199999999999932" fill="#f2f2f2"/>
<rect x="14.6" y="874.4" width="2456.8" height="21.600000000000023" fill="#f2f2f2"/>
<path d="M171.98 610.8V874.4M188.07 610.8V874.4M204.15 610.8V874.4M220.23 610.8V874.4M236.32 610.8V874.4M268.48 610.8V874.4M284.57 610.8V874.4M300.65 610.8V874.4M316.73 610.8V874.4M332.82 610.8V874.4M364.98 610.8V874.4M381.07 610.8V874.4M397.15 610.8V874.4M413.23 610.8V874.4M429.32 610.8V874.4M461.48 610.8V874.4M477.57 610.8V874.4M493.65 610.8V874.4M509.73 610.8V874.4M525.82 610.8V874.4M557.98 610.8V874.4M574.07 610.8V874.4M590.15 610.8V874.4M606.23 610.8V874.4M622.32 610.8V874.4M654.48 610.8V874.4M670.57 610.8V874.4M686.65 610.8V874.4M702.73 610.8V874.4M718.82 610.8V874.4M750.98 610.8V874.4M767.07 610.8V874.4M783.15 610.8V874.4M799.23 610.8V874.4M815.32 610.8V874.4M847.48 610.8V874.4M863.57 610.8V874.4M879.65 610.8V874.4M895.73 610.8V874.4M911.82 610.8V874.4M943.98 610.8V874.4M960.07 610.8V874.4M976.15 610.8V874.4M992.23 610.8V874.4M1008.32 610.8V874.4M1040.48 610.8V874.4M1056.57 610.8V874.4M1072.65 610.8V874.4M1088.73 610.8V874.4M1104.82 610.8V874.4M1136.98 610.8V874.4M1153.07 610.8V874.4M1169.15 610.8V874.4M1185.23 610.8V874.4M1201.32 610.8V874.4M1233.48 610.8V874.4M1249.57 610.8V874.4M1265.65 610.8V874.4M1281.73 610.8V874.4M1297.82 610.8V874.4M1329.98 610.8V874.4M1346.07 610.8V874.4M1362.15 610.8V874.4M1378.23 610.8V874.4M1394.32 610.8V874.4M1426.48 610.8V874.4M1442.57 610.8V874.4M1458.65 610.8V874.4M1474.73 610.8V874.4M1490.82 610.8V874.4M1522.98 610.8V874.4M1539.07 610.8V874.4M1555.15 610.8V874.4M1571.23 610.8V874.4M1587.32 610.8V874.4M1619.48 610.8V874.4M1635.57 610.8V874.4M1651.65 610.8V874.4M1667.73 610.8V874.4M1683.82 610.8V874.4M1715.98 610.8V874.4M1732.07 610.8V874.4M1748.15 610.8V874.4M1764.23 610.8V874.4M1780.32 610.8V874.4M1812.48 610.8V874.4M1828.57 610.8V874.4M1844.65 610.8V874.4M1860.73 610.8V874.4M1876.82 610.8V874.4M1908.98 610.8V874.4M1925.07 610.8V874.4M1941.15 610.8V874.4M1957.23 610.8V874.4M1973.32 610.8V874.4M2005.48 610.8V874.4M2021.57 610.8V874.4M2037.65 610.8V874.4M2053.73 610.8V874.4M2069.82 610.8V874.4M2101.98 610.8V874.4M2118.07 610.8V874.4M2134.15 610.8V874.4M2150.23 610.8V874.4M2166.32 610.8V874.4M2198.48 610.8V874.4M2214.57 610.8V874.4M2230.65 610.8V874.4M2246.73 610.8V874.4M2262.82 610.8V874.4M2294.98 610.8V874.4M2311.07 610.8V874.4M2327.15 610.8V874.4M2343.23 610.8V874.4M2359.32 610.8V874.4M2391.48 610.8V874.4M2407.57 610.8V874.4M2423.65 610.8V874.4M2439.73 610.8V874.4M2455.82 610.8V874.4" stroke="#eeeeee" stroke-width="1.7" fill="none"/>
<path d="M14.6 645.1H2471.4M14.6 677.6H2471.4M14.6 729.2H2471.4M14.6 776.5H2471.4M14.6 828.9H2471.4" stroke="#e2e2e2" stroke-width="2" fill="none"/>
<path d="M252.40 610.8V874.4M348.90 610.8V874.4M445.40 610.8V874.4M541.90 610.8V874.4M638.40 610.8V874.4M734.90 610.8V874.4M831.40 610.8V874.4M927.90 610.8V874.4M1024.40 610.8V874.4M1120.90 610.8V874.4M1217.40 610.8V874.4M1313.90 610.8V874.4M1410.40 610.8V874.4M1506.90 610.8V874.4M1603.40 610.8V874.4M1699.90 610.8V874.4M1796.40 610.8V874.4M1892.90 610.8V874.4M1989.40 610.8V874.4M2085.90 610.8V874.4M2182.40 610.8V874.4M2278.90 610.8V874.4M2375.40 610.8V874.4" stroke="#7c7c7c" stroke-width="1.2" fill="none"/>
<rect x="155.9" y="620" width="406.1" height="15" fill="#c3c3c3"/>
<rect x="1624" y="620" width="847" height="15" fill="#c3c3c3"/>
<rect x="562.5" y="654.2" width="720.5" height="15.8" fill="#fe0000"/>
<rect x="1336" y="654.2" width="288" height="15.8" fill="#00c400"/>
<rect x="562.5" y="686.5" width="720.5" height="32.8" fill="rgb(228,70,40)" fill-opacity="0.4"/>
<rect x="553" y="738" width="1189.5" height="21" fill="rgb(150,132,245)" fill-opacity="0.4"/>
<defs><pattern id="hatch" width="4.5" height="4.5" patternUnits="userSpaceOnUse" patternTransform="rotate(-51)"><rect width="4.5" height="4.5" fill="#606060"/><rect width="2" height="4.5" fill="#c9c9c9"/></pattern></defs>
<rect x="155.9" y="866.2" width="396.5" height="7.2" fill="url(#hatch)"/>
<rect x="1744.2" y="866.2" width="727.2" height="7.2" fill="url(#hatch)"/>
<rect x="552.4" y="853.7" width="9.8" height="19.9" fill="#000" fill-opacity="0.655"/>
<rect x="1003.1" y="853.7" width="26.9" height="19.9" fill="#000" fill-opacity="0.655"/>
<rect x="1283.1" y="853.7" width="52.4" height="19.9" fill="#000" fill-opacity="0.655"/>
<rect x="1624.1" y="853.7" width="120.1" height="19.9" fill="#000" fill-opacity="0.655"/>
<path d="M562.2 836.6H568.8V873.6H562.2zM572.1 836.6H583.1V873.6H572.1zM591.5 836.6H604.2V873.6H591.5zM612.4 836.6H617.0V873.6H612.4zM634.8 836.6H650.7V873.6H634.8zM654.1 836.6H668.8V873.6H654.1zM673.1 836.6H680.2V873.6H673.1zM692.9 836.6H698.9V873.6H692.9zM706.9 836.6H720.0V873.6H706.9zM732.5 836.6H739.3V873.6H732.5zM755.2 836.6H771.8V873.6H755.2zM784.4 836.6H800.2V873.6H784.4zM803.7 836.6H809.9V873.6H803.7zM813.2 836.6H824.3V873.6H813.2zM827.8 836.6H839.1V873.6H827.8zM850.4 836.6H895.1V873.6H850.4zM903.1 836.6H927.5V873.6H903.1zM930.8 836.6H932.0V873.6H930.8zM940.6 836.6H945.0V873.6H940.6zM948.0 836.6H962.9V873.6H948.0zM965.9 836.6H976.0V873.6H965.9zM987.2 836.6H995.0V873.6H987.2zM999.9 836.6H1003.1V873.6H999.9zM1030.0 836.6H1032.2V873.6H1030.0zM1043.7 836.6H1048.1V873.6H1043.7zM1051.0 836.6H1053.3V873.6H1051.0zM1064.3 836.6H1073.6V873.6H1064.3zM1081.9 836.6H1093.0V873.6H1081.9zM1096.3 836.6H1104.2V873.6H1096.3zM1111.0 836.6H1117.1V873.6H1111.0zM1123.9 836.6H1139.5V873.6H1123.9zM1152.2 836.6H1154.7V873.6H1152.2zM1157.7 836.6H1186.4V873.6H1157.7zM1192.9 836.6H1218.2V873.6H1192.9zM1227.0 836.6H1229.6V873.6H1227.0zM1234.6 836.6H1283.1V873.6H1234.6zM1335.5 836.6H1360.1V873.6H1335.5zM1364.9 836.6H1369.5V873.6H1364.9zM1374.7 836.6H1379.2V873.6H1374.7zM1393.8 836.6H1397.0V873.6H1393.8zM1427.7 836.6H1435.2V873.6H1427.7zM1442.2 836.6H1445.0V873.6H1442.2zM1456.6 836.6H1459.6V873.6H1456.6zM1462.3 836.6H1465.0V873.6H1462.3zM1470.6 836.6H1480.6V873.6H1470.6zM1488.7 836.6H1500.0V873.6H1488.7zM1515.8 836.6H1533.9V873.6H1515.8zM1544.9 836.6H1556.2V873.6H1544.9zM1562.2 836.6H1583.6V873.6H1562.2zM1591.6 836.6H1618.7V873.6H1591.6z" fill="#ff0000" fill-opacity="0.8"/>
<path d="M568.8 842.0H572.1V873.6H568.8zM583.1 842.0H591.5V873.6H583.1zM604.2 842.0H612.4V873.6H604.2zM617.0 842.0H634.8V873.6H617.0zM650.7 842.0H654.1V873.6H650.7zM668.8 842.0H673.1V873.6H668.8zM680.2 842.0H692.9V873.6H680.2zM698.9 842.0H706.9V873.6H698.9zM720.0 842.0H732.5V873.6H720.0zM739.3 842.0H755.2V873.6H739.3zM771.8 842.0H784.4V873.6H771.8zM800.2 842.0H803.7V873.6H800.2zM809.9 842.0H813.2V873.6H809.9zM824.3 842.0H827.8V873.6H824.3zM839.1 842.0H850.4V873.6H839.1zM895.1 842.0H903.1V873.6H895.1zM927.5 842.0H930.8V873.6H927.5zM932.0 842.0H940.6V873.6H932.0zM945.0 842.0H948.0V873.6H945.0zM962.9 842.0H965.9V873.6H962.9zM976.0 842.0H987.2V873.6H976.0zM995.0 842.0H999.9V873.6H995.0zM1032.2 842.0H1043.7V873.6H1032.2zM1048.1 842.0H1051.0V873.6H1048.1zM1053.3 842.0H1064.3V873.6H1053.3zM1073.6 842.0H1081.9V873.6H1073.6zM1093.0 842.0H1096.3V873.6H1093.0zM1104.2 842.0H1111.0V873.6H1104.2zM1117.1 842.0H1123.9V873.6H1117.1zM1139.5 842.0H1152.2V873.6H1139.5zM1154.7 842.0H1157.7V873.6H1154.7zM1186.4 842.0H1192.9V873.6H1186.4zM1218.2 842.0H1227.0V873.6H1218.2zM1229.6 842.0H1234.6V873.6H1229.6zM1360.1 842.0H1364.9V873.6H1360.1zM1369.5 842.0H1374.7V873.6H1369.5zM1379.2 842.0H1393.8V873.6H1379.2zM1397.0 842.0H1427.7V873.6H1397.0zM1435.2 842.0H1442.2V873.6H1435.2zM1445.0 842.0H1456.6V873.6H1445.0zM1459.6 842.0H1462.3V873.6H1459.6zM1465.0 842.0H1470.6V873.6H1465.0zM1480.6 842.0H1488.7V873.6H1480.6zM1500.0 842.0H1515.8V873.6H1500.0zM1533.9 842.0H1544.9V873.6H1533.9zM1556.2 842.0H1562.2V873.6H1556.2zM1583.6 842.0H1591.6V873.6H1583.6zM1618.7 842.0H1624.1V873.6H1618.7z" fill="#0000ff" fill-opacity="0.8"/>
<rect x="14.0" y="873.0" width="2458.0" height="2.7" fill="#9a9a9a"/>
<g transform="translate(559.9,741.9) scale(1.0)"><rect x="0" y="0" width="17.6" height="10.4" fill="#000"/><rect x="0.6" y="10.4" width="26.6" height="2.2" fill="#3a3a3a"/><path d="M17.6 3.2H22.2C25.8 3.2 28.2 6 28.2 9V12.6H17.6z" fill="#000"/><path d="M19.6 4.4H22C24.6 4.4 26.4 6 26.8 8.2H19.6z" fill="#fff"/><circle cx="4.2" cy="13.4" r="2.1" fill="#eee" stroke="#555" stroke-width="0.9"/><circle cx="23.6" cy="13.4" r="2.1" fill="#eee" stroke="#555" stroke-width="0.9"/></g>
<g transform="translate(540.2,787.7) scale(0.89)"><rect x="0" y="0" width="17.6" height="10.4" fill="#000"/><rect x="0.6" y="10.4" width="26.6" height="2.2" fill="#3a3a3a"/><path d="M17.6 3.2H22.2C25.8 3.2 28.2 6 28.2 9V12.6H17.6z" fill="#000"/><path d="M19.6 4.4H22C24.6 4.4 26.4 6 26.8 8.2H19.6z" fill="#fff"/><circle cx="4.2" cy="13.4" r="2.1" fill="#eee" stroke="#555" stroke-width="0.9"/><circle cx="23.6" cy="13.4" r="2.1" fill="#eee" stroke="#555" stroke-width="0.9"/></g>
<rect x="552.3" y="808.8" width="2.3" height="7.4" fill="#ff6a6a"/>
<g transform="translate(1739.8,787.7) scale(0.9)"><rect x="0" y="0" width="17.6" height="10.4" fill="#000"/><rect x="0.6" y="10.4" width="26.6" height="2.2" fill="#3a3a3a"/><path d="M17.6 3.2H22.2C25.8 3.2 28.2 6 28.2 9V12.6H17.6z" fill="#000"/><path d="M19.6 4.4H22C24.6 4.4 26.4 6 26.8 8.2H19.6z" fill="#fff"/><circle cx="4.2" cy="13.4" r="2.1" fill="#eee" stroke="#555" stroke-width="0.9"/><circle cx="23.6" cy="13.4" r="2.1" fill="#eee" stroke="#555" stroke-width="0.9"/></g>
<path d="M1739.8 782.4L1765.2 808.2M1765.2 782.4L1739.8 808.2" stroke="#ff2e2e" stroke-width="1.5" fill="none"/>
<path d="M1736.8 783.4L1732.4 787L1736.8 790.8z" fill="#ff2e2e"/>
<rect x="1708.5" y="809.2" width="60.2" height="1.7" fill="#bdbdbd"/>
<rect x="1737.8" y="809.6" width="1.8" height="6.6" fill="#ff5a5a"/>
<rect x="707.8" y="741.4" width="53" height="14.4" fill="#a9a1cf"/>
<rect x="707.8" y="741.4" width="7" height="7.2" fill="#9c94c4"/>
<rect x="714.8" y="748.6" width="7" height="7.2" fill="#a79fce"/>
<rect x="721.8" y="741.4" width="7" height="7.2" fill="#b9b2e0"/>
<rect x="728.8" y="748.6" width="7" height="7.2" fill="#8f88b6"/>
<rect x="735.8" y="741.4" width="7" height="7.2" fill="#a8a0d0"/>
<rect x="742.8" y="748.6" width="7" height="7.2" fill="#968ebd"/>
<rect x="749.8" y="741.4" width="7" height="7.2" fill="#8780ad"/>
<rect x="755.8" y="748.6" width="7" height="7.2" fill="#bcb5e6"/>
</svg>
<div style="position:absolute;left:21.80px;top:620.60px;font-family:'DejaVu Sans','Liberation Sans',sans-serif;font-size:13.8px;font-weight:normal;color:#262626;white-space:pre;line-height:1.2;transform:scaleX(1.0967);transform-origin:0 0;">Hviletid</div>
<div style="position:absolute;left:21.80px;top:654.60px;font-family:'DejaVu Sans','Liberation Sans',sans-serif;font-size:13.8px;font-weight:normal;color:#262626;white-space:pre;line-height:1.2;transform:scaleX(1.1551);transform-origin:0 0;">Periode (4:30)</div>
<div style="position:absolute;left:21.80px;top:696.20px;font-family:'DejaVu Sans','Liberation Sans',sans-serif;font-size:13.8px;font-weight:normal;color:#262626;white-space:pre;line-height:1.2;transform:scaleX(1.1112);transform-origin:0 0;">Overtrædelser</div>
<div style="position:absolute;left:21.80px;top:745.60px;font-family:'DejaVu Sans','Liberation Sans',sans-serif;font-size:13.8px;font-weight:normal;color:#262626;white-space:pre;line-height:1.2;transform:scaleX(1.1455);transform-origin:0 0;">Køretøjer</div>
<div style="position:absolute;left:21.80px;top:795.00px;font-family:'DejaVu Sans','Liberation Sans',sans-serif;font-size:13.8px;font-weight:normal;color:#262626;white-space:pre;line-height:1.2;transform:scaleX(1.1262);transform-origin:0 0;">Registreringer</div>
<div style="position:absolute;left:21.80px;top:847.00px;font-family:'DejaVu Sans','Liberation Sans',sans-serif;font-size:13.8px;font-weight:normal;color:#262626;white-space:pre;line-height:1.2;transform:scaleX(1.1200);transform-origin:0 0;">Aktiviteter</div>
<div style="position:absolute;left:246.41px;top:592.70px;font-family:'DejaVu Sans','Liberation Sans',sans-serif;font-size:13.8px;font-weight:normal;color:#262626;white-space:pre;line-height:1.2;transform:scaleX(1.08);">1</div>
<div style="position:absolute;left:246.41px;top:877.90px;font-family:'DejaVu Sans','Liberation Sans',sans-serif;font-size:13.8px;font-weight:normal;color:#262626;white-space:pre;line-height:1.2;transform:scaleX(1.08);">1</div>
<div style="position:absolute;left:342.91px;top:592.70px;font-family:'DejaVu Sans','Liberation Sans',sans-serif;font-size:13.8px;font-weight:normal;color:#262626;white-space:pre;line-height:1.2;transform:scaleX(1.08);">2</div>
<div style="position:absolute;left:342.91px;top:877.90px;font-family:'DejaVu Sans','Liberation Sans',sans-serif;font-size:13.8px;font-weight:normal;color:#262626;white-space:pre;line-height:1.2;transform:scaleX(1.08);">2</div>
<div style="position:absolute;left:439.41px;top:592.70px;font-family:'DejaVu Sans','Liberation Sans',sans-serif;font-size:13.8px;font-weight:normal;color:#262626;white-space:pre;line-height:1.2;transform:scaleX(1.08);">3</div>
<div style="position:absolute;left:439.41px;top:877.90px;font-family:'DejaVu Sans','Liberation Sans',sans-serif;font-size:13.8px;font-weight:normal;color:#262626;white-space:pre;line-height:1.2;transform:scaleX(1.08);">3</div>
<div style="position:absolute;left:535.91px;top:592.70px;font-family:'DejaVu Sans','Liberation Sans',sans-serif;font-size:13.8px;font-weight:normal;color:#262626;white-space:pre;line-height:1.2;transform:scaleX(1.08);">4</div>
<div style="position:absolute;left:535.91px;top:877.90px;font-family:'DejaVu Sans','Liberation Sans',sans-serif;font-size:13.8px;font-weight:normal;color:#262626;white-space:pre;line-height:1.2;transform:scaleX(1.08);">4</div>
<div style="position:absolute;left:632.41px;top:592.70px;font-family:'DejaVu Sans','Liberation Sans',sans-serif;font-size:13.8px;font-weight:normal;color:#262626;white-space:pre;line-height:1.2;transform:scaleX(1.08);">5</div>
<div style="position:absolute;left:632.41px;top:877.90px;font-family:'DejaVu Sans','Liberation Sans',sans-serif;font-size:13.8px;font-weight:normal;color:#262626;white-space:pre;line-height:1.2;transform:scaleX(1.08);">5</div>
<div style="position:absolute;left:728.91px;top:592.70px;font-family:'DejaVu Sans','Liberation Sans',sans-serif;font-size:13.8px;font-weight:normal;color:#262626;white-space:pre;line-height:1.2;transform:scaleX(1.08);">6</div>
<div style="position:absolute;left:728.91px;top:877.90px;font-family:'DejaVu Sans','Liberation Sans',sans-serif;font-size:13.8px;font-weight:normal;color:#262626;white-space:pre;line-height:1.2;transform:scaleX(1.08);">6</div>
<div style="position:absolute;left:825.41px;top:592.70px;font-family:'DejaVu Sans','Liberation Sans',sans-serif;font-size:13.8px;font-weight:normal;color:#262626;white-space:pre;line-height:1.2;transform:scaleX(1.08);">7</div>
<div style="position:absolute;left:825.41px;top:877.90px;font-family:'DejaVu Sans','Liberation Sans',sans-serif;font-size:13.8px;font-weight:normal;color:#262626;white-space:pre;line-height:1.2;transform:scaleX(1.08);">7</div>
<div style="position:absolute;left:921.91px;top:592.70px;font-family:'DejaVu Sans','Liberation Sans',sans-serif;font-size:13.8px;font-weight:normal;color:#262626;white-space:pre;line-height:1.2;transform:scaleX(1.08);">8</div>
<div style="position:absolute;left:921.91px;top:877.90px;font-family:'DejaVu Sans','Liberation Sans',sans-serif;font-size:13.8px;font-weight:normal;color:#262626;white-space:pre;line-height:1.2;transform:scaleX(1.08);">8</div>
<div style="position:absolute;left:1018.41px;top:592.70px;font-family:'DejaVu Sans','Liberation Sans',sans-serif;font-size:13.8px;font-weight:normal;color:#262626;white-space:pre;line-height:1.2;transform:scaleX(1.08);">9</div>
<div style="position:absolute;left:1018.41px;top:877.90px;font-family:'DejaVu Sans','Liberation Sans',sans-serif;font-size:13.8px;font-weight:normal;color:#262626;white-space:pre;line-height:1.2;transform:scaleX(1.08);">9</div>
<div style="position:absolute;left:1110.52px;top:592.70px;font-family:'DejaVu Sans','Liberation Sans',sans-serif;font-size:13.8px;font-weight:normal;color:#262626;white-space:pre;line-height:1.2;transform:scaleX(1.08);">10</div>
<div style="position:absolute;left:1110.52px;top:877.90px;font-family:'DejaVu Sans','Liberation Sans',sans-serif;font-size:13.8px;font-weight:normal;color:#262626;white-space:pre;line-height:1.2;transform:scaleX(1.08);">10</div>
<div style="position:absolute;left:1207.02px;top:592.70px;font-family:'DejaVu Sans','Liberation Sans',sans-serif;font-size:13.8px;font-weight:normal;color:#262626;white-space:pre;line-height:1.2;transform:scaleX(1.08);">11</div>
<div style="position:absolute;left:1207.02px;top:877.90px;font-family:'DejaVu Sans','Liberation Sans',sans-serif;font-size:13.8px;font-weight:normal;color:#262626;white-space:pre;line-height:1.2;transform:scaleX(1.08);">11</div>
<div style="position:absolute;left:1303.52px;top:592.70px;font-family:'DejaVu Sans','Liberation Sans',sans-serif;font-size:13.8px;font-weight:normal;color:#262626;white-space:pre;line-height:1.2;transform:scaleX(1.08);">12</div>
<div style="position:absolute;left:1303.52px;top:877.90px;font-family:'DejaVu Sans','Liberation Sans',sans-serif;font-size:13.8px;font-weight:normal;color:#262626;white-space:pre;line-height:1.2;transform:scaleX(1.08);">12</div>
<div style="position:absolute;left:1400.02px;top:592.70px;font-family:'DejaVu Sans','Liberation Sans',sans-serif;font-size:13.8px;font-weight:normal;color:#262626;white-space:pre;line-height:1.2;transform:scaleX(1.08);">13</div>
<div style="position:absolute;left:1400.02px;top:877.90px;font-family:'DejaVu Sans','Liberation Sans',sans-serif;font-size:13.8px;font-weight:normal;color:#262626;white-space:pre;line-height:1.2;transform:scaleX(1.08);">13</div>
<div style="position:absolute;left:1496.52px;top:592.70px;font-family:'DejaVu Sans','Liberation Sans',sans-serif;font-size:13.8px;font-weight:normal;color:#262626;white-space:pre;line-height:1.2;transform:scaleX(1.08);">14</div>
<div style="position:absolute;left:1496.52px;top:877.90px;font-family:'DejaVu Sans','Liberation Sans',sans-serif;font-size:13.8px;font-weight:normal;color:#262626;white-space:pre;line-height:1.2;transform:scaleX(1.08);">14</div>
<div style="position:absolute;left:1593.02px;top:592.70px;font-family:'DejaVu Sans','Liberation Sans',sans-serif;font-size:13.8px;font-weight:normal;color:#262626;white-space:pre;line-height:1.2;transform:scaleX(1.08);">15</div>
<div style="position:absolute;left:1593.02px;top:877.90px;font-family:'DejaVu Sans','Liberation Sans',sans-serif;font-size:13.8px;font-weight:normal;color:#262626;white-space:pre;line-height:1.2;transform:scaleX(1.08);">15</div>
<div style="position:absolute;left:1689.52px;top:592.70px;font-family:'DejaVu Sans','Liberation Sans',sans-serif;font-size:13.8px;font-weight:normal;color:#262626;white-space:pre;line-height:1.2;transform:scaleX(1.08);">16</div>
<div style="position:absolute;left:1689.52px;top:877.90px;font-family:'DejaVu Sans','Liberation Sans',sans-serif;font-size:13.8px;font-weight:normal;color:#262626;white-space:pre;line-height:1.2;transform:scaleX(1.08);">16</div>
<div style="position:absolute;left:1786.02px;top:592.70px;font-family:'DejaVu Sans','Liberation Sans',sans-serif;font-size:13.8px;font-weight:normal;color:#262626;white-space:pre;line-height:1.2;transform:scaleX(1.08);">17</div>
<div style="position:absolute;left:1786.02px;top:877.90px;font-family:'DejaVu Sans','Liberation Sans',sans-serif;font-size:13.8px;font-weight:normal;color:#262626;white-space:pre;line-height:1.2;transform:scaleX(1.08);">17</div>
<div style="position:absolute;left:1882.52px;top:592.70px;font-family:'DejaVu Sans','Liberation Sans',sans-serif;font-size:13.8px;font-weight:normal;color:#262626;white-space:pre;line-height:1.2;transform:scaleX(1.08);">18</div>
<div style="position:absolute;left:1882.52px;top:877.90px;font-family:'DejaVu Sans','Liberation Sans',sans-serif;font-size:13.8px;font-weight:normal;color:#262626;white-space:pre;line-height:1.2;transform:scaleX(1.08);">18</div>
<div style="position:absolute;left:1979.02px;top:592.70px;font-family:'DejaVu Sans','Liberation Sans',sans-serif;font-size:13.8px;font-weight:normal;color:#262626;white-space:pre;line-height:1.2;transform:scaleX(1.08);">19</div>
<div style="position:absolute;left:1979.02px;top:877.90px;font-family:'DejaVu Sans','Liberation Sans',sans-serif;font-size:13.8px;font-weight:normal;color:#262626;white-space:pre;line-height:1.2;transform:scaleX(1.08);">19</div>
<div style="position:absolute;left:2075.52px;top:592.70px;font-family:'DejaVu Sans','Liberation Sans',sans-serif;font-size:13.8px;font-weight:normal;color:#262626;white-space:pre;line-height:1.2;transform:scaleX(1.08);">20</div>
<div style="position:absolute;left:2075.52px;top:877.90px;font-family:'DejaVu Sans','Liberation Sans',sans-serif;font-size:13.8px;font-weight:normal;color:#262626;white-space:pre;line-height:1.2;transform:scaleX(1.08);">20</div>
<div style="position:absolute;left:2172.02px;top:592.70px;font-family:'DejaVu Sans','Liberation Sans',sans-serif;font-size:13.8px;font-weight:normal;color:#262626;white-space:pre;line-height:1.2;transform:scaleX(1.08);">21</div>
<div style="position:absolute;left:2172.02px;top:877.90px;font-family:'DejaVu Sans','Liberation Sans',sans-serif;font-size:13.8px;font-weight:normal;color:#262626;white-space:pre;line-height:1.2;transform:scaleX(1.08);">21</div>
<div style="position:absolute;left:2268.52px;top:592.70px;font-family:'DejaVu Sans','Liberation Sans',sans-serif;font-size:13.8px;font-weight:normal;color:#262626;white-space:pre;line-height:1.2;transform:scaleX(1.08);">22</div>
<div style="position:absolute;left:2268.52px;top:877.90px;font-family:'DejaVu Sans','Liberation Sans',sans-serif;font-size:13.8px;font-weight:normal;color:#262626;white-space:pre;line-height:1.2;transform:scaleX(1.08);">22</div>
<div style="position:absolute;left:2365.02px;top:592.70px;font-family:'DejaVu Sans','Liberation Sans',sans-serif;font-size:13.8px;font-weight:normal;color:#262626;white-space:pre;line-height:1.2;transform:scaleX(1.08);">23</div>
<div style="position:absolute;left:2365.02px;top:877.90px;font-family:'DejaVu Sans','Liberation Sans',sans-serif;font-size:13.8px;font-weight:normal;color:#262626;white-space:pre;line-height:1.2;transform:scaleX(1.08);">23</div>
<div style="position:absolute;left:157.60px;top:620.60px;font-family:'DejaVu Sans','Liberation Sans',sans-serif;font-size:13.8px;font-weight:normal;color:#262626;white-space:pre;line-height:1.2;transform:scaleX(1.1358);transform-origin:0 0;">Dagligt hvil | 12 timer og 40 minutter</div>
<div style="position:absolute;left:1625.00px;top:620.60px;font-family:'DejaVu Sans','Liberation Sans',sans-serif;font-size:13.8px;font-weight:normal;color:#262626;white-space:pre;line-height:1.2;transform:scaleX(1.1407);transform-origin:0 0;">Dagligt hvil | 2 dage, 13 timer og 30 minutter</div>
<div style="position:absolute;left:595.60px;top:739.60px;font-family:'DejaVu Sans','Liberation Sans',sans-serif;font-size:16.5px;font-weight:normal;color:#333;white-space:pre;line-height:1.2;letter-spacing:-0.181px;">Vogn 15, AW8</div>
<div style="position:absolute;left:566.20px;top:688.80px;font-family:'DejaVu Sans','Liberation Sans',sans-serif;font-size:14.9px;font-weight:bold;color:#2a1512;white-space:pre;line-height:1.2;letter-spacing:0.332px;">Uafbrudt køretid (Pausereglen)</div>
<div style="position:absolute;left:0;top:0;width:1283.0px;height:1199px;overflow:hidden"><div style="position:absolute;left:565.80px;top:703.90px;font-family:'DejaVu Sans','Liberation Sans',sans-serif;font-size:13.5px;font-weight:normal;color:#2a1512;white-space:pre;line-height:1.2;transform:scaleX(1.1733);transform-origin:0 0;">Ikke holdt pause efter en køretid på 04:30 timer. Køretid: 04:32 timer. Overskridelse: 00:02 timer.</div></div>
<div style="position:absolute;left:1712.20px;top:789.60px;font-family:'DejaVu Sans','Liberation Sans',sans-serif;font-size:15px;font-weight:normal;color:#555;white-space:pre;line-height:1.2;letter-spacing:0.205px;">DK</div>
</div>
<svg style="position:absolute;left:0;top:585px" width="2489" height="315" viewBox="0 585 2489 315">
<path d="M14.6 874V896.2H2471.4V874" stroke="#9a9a9a" stroke-width="1.4" fill="none"/><path d="M14.6 589.6H2471.4V610.8H14.6zM155.4 589.6V896.0" stroke="#676767" stroke-width="1.5" fill="none"/>
</svg>
<!-- ============ summary ============ -->
<div style="position:absolute;left:19px;top:948px;width:92px;height:32px;border:1px solid #b0b0b0;border-radius:3.5px;background:#e9e9e9"></div><div style="position:absolute;left:123px;top:948px;width:92px;height:32px;border:1px solid #b0b0b0;border-radius:3.5px;background:#e9e9e9"></div><div style="position:absolute;left:227px;top:948px;width:92px;height:32px;border:1px solid #b0b0b0;border-radius:3.5px;background:#e9e9e9"></div><div style="position:absolute;left:331px;top:948px;width:92px;height:32px;border:1px solid #b0b0b0;border-radius:3.5px;background:#e9e9e9"></div><div style="position:absolute;left:435px;top:948px;width:106px;height:32px;border:1px solid #b0b0b0;border-radius:3.5px;background:#e9e9e9"></div><div style="position:absolute;left:553px;top:948px;width:92px;height:32px;border:1px solid #b0b0b0;border-radius:3.5px;background:#e9e9e9"></div>
<div style="position:absolute;left:14px;top:1010px;width:2446px;height:172px;background:#ffdddd;border-left:6px solid #f44336;border-right:6px solid #f44336"></div>
<svg style="position:absolute;left:0;top:940px" width="700" height="130" viewBox="0 940 700 130">
<circle cx="31.2" cy="966.0" r="6.8" fill="none" stroke="#ff3030" stroke-width="1.1"/><circle cx="31.2" cy="966.6" r="1.6" fill="none" stroke="#ff3030" stroke-width="1"/><path d="M24.4 967.2H29.599999999999998M32.8 967.2H38.0" stroke="#ff3030" stroke-width="1" fill="none"/>
<g transform="translate(135.4,965.8)" stroke="#1c1cff" fill="none"><path d="M-6.7 6.5L4.1 -3.3M6.7 6.5L-4.1 -3.3" stroke-width="1" stroke-opacity="0.9"/><path d="M1.9 -5.5L6.3 -1.1M-1.9 -5.5L-6.3 -1.1" stroke-width="2.5"/></g>
<path d="M232.8 959.6H245.8V972.6H232.8zM232.8 972.6L245.8 959.6" stroke="#22c422" stroke-width="1.3" fill="none"/>
<path d="M336.8 959.2V972.8M336.8 966.2H350.4V972.8" stroke="#7a7a7a" stroke-width="1.3" fill="none"/>
<circle cx="447.0" cy="966.0" r="6.8" fill="none" stroke="#ff3030" stroke-width="1.1"/><circle cx="447.0" cy="966.6" r="1.6" fill="none" stroke="#ff3030" stroke-width="1"/><path d="M440.2 967.2H445.4M448.6 967.2H453.8" stroke="#ff3030" stroke-width="1" fill="none"/>
<g transform="translate(461.6,965.8)" stroke="#1c1cff" fill="none"><path d="M-6.7 6.5L4.1 -3.3M6.7 6.5L-4.1 -3.3" stroke-width="1" stroke-opacity="0.9"/><path d="M1.9 -5.5L6.3 -1.1M-1.9 -5.5L-6.3 -1.1" stroke-width="2.5"/></g>
<path d="M67.2 1028.2L80.2 1053H54.2z" fill="#f44336" stroke="#f44336" stroke-width="2.4" stroke-linejoin="round"/>
<rect x="65.9" y="1034.2" width="2.7" height="12.6" rx="1.2" fill="#fff"/><circle cx="67.25" cy="1050.2" r="1.6" fill="#fff"/>
</svg>
<div style="position:absolute;left:2235.70px;top:54.90px;font-family:'DejaVu Sans','Liberation Sans',sans-serif;font-size:24px;font-weight:normal;color:#fff;white-space:pre;line-height:1.2;letter-spacing:-0.298px;">Steen</div>
<div style="position:absolute;left:2337.60px;top:90.50px;font-family:'DejaVu Sans','Liberation Sans',sans-serif;font-size:17.4px;font-weight:normal;color:#fff;white-space:pre;line-height:1.2;letter-spacing:0.120px;">DK217</div>
<div style="position:absolute;left:32.00px;top:157.60px;font-family:'DejaVu Sans','Liberation Sans',sans-serif;font-size:19.2px;font-weight:bold;color:#000;white-space:pre;line-height:1.2;letter-spacing:-0.374px;">Rapport</div>
<div style="position:absolute;left:32.00px;top:202.60px;font-family:'DejaVu Sans','Liberation Sans',sans-serif;font-size:19.2px;font-weight:bold;color:#000;white-space:pre;line-height:1.2;letter-spacing:-0.253px;">Virksomhed</div>
<div style="position:absolute;left:32.00px;top:247.60px;font-family:'DejaVu Sans','Liberation Sans',sans-serif;font-size:19.2px;font-weight:bold;color:#000;white-space:pre;line-height:1.2;letter-spacing:-0.407px;">Periode</div>
<div style="position:absolute;left:32.00px;top:292.60px;font-family:'DejaVu Sans','Liberation Sans',sans-serif;font-size:19.2px;font-weight:bold;color:#000;white-space:pre;line-height:1.2;letter-spacing:-0.193px;">Chauffør</div>
<div style="position:absolute;left:32.00px;top:337.60px;font-family:'DejaVu Sans','Liberation Sans',sans-serif;font-size:19.2px;font-weight:bold;color:#000;white-space:pre;line-height:1.2;letter-spacing:-0.145px;">Køretøjer</div>
<div style="position:absolute;left:316.60px;top:157.60px;font-family:'DejaVu Sans','Liberation Sans',sans-serif;font-size:19.2px;font-weight:normal;color:#000;white-space:pre;line-height:1.2;letter-spacing:-0.063px;">Dagsgrafik, Chauffør</div>
<div style="position:absolute;left:316.60px;top:202.60px;font-family:'DejaVu Sans','Liberation Sans',sans-serif;font-size:19.2px;font-weight:normal;color:#000;white-space:pre;line-height:1.2;letter-spacing:-0.337px;">Steen</div>
<div style="position:absolute;left:490.50px;top:202.60px;font-family:'DejaVu Sans','Liberation Sans',sans-serif;font-size:19.2px;font-weight:normal;color:#000;white-space:pre;line-height:1.2;">,</div>
<div style="position:absolute;left:503.40px;top:206.60px;font-family:'DejaVu Sans','Liberation Sans',sans-serif;font-size:15.6px;font-weight:normal;color:#999;white-space:pre;line-height:1.2;letter-spacing:0.120px;">DK217</div>
<div style="position:absolute;left:316.60px;top:247.60px;font-family:'DejaVu Sans','Liberation Sans',sans-serif;font-size:19.2px;font-weight:normal;color:#000;white-space:pre;line-height:1.2;letter-spacing:0.091px;">fra d. 1. marts 2019 til d. 1. april 2019</div>
<div style="position:absolute;left:316.60px;top:292.60px;font-family:'DejaVu Sans','Liberation Sans',sans-serif;font-size:19.2px;font-weight:normal;color:#000;white-space:pre;line-height:1.2;letter-spacing:-0.354px;">Flemming</div>
<div style="position:absolute;left:554.50px;top:292.60px;font-family:'DejaVu Sans','Liberation Sans',sans-serif;font-size:19.2px;font-weight:normal;color:#000;white-space:pre;line-height:1.2;">,</div>
<div style="position:absolute;left:567.90px;top:296.60px;font-family:'DejaVu Sans','Liberation Sans',sans-serif;font-size:15.6px;font-weight:normal;color:#999;white-space:pre;line-height:1.2;letter-spacing:0.024px;">DK0000009</div>
<div style="position:absolute;left:711.50px;top:297.60px;font-family:'DejaVu Sans','Liberation Sans',sans-serif;font-size:8.5px;font-weight:normal;color:#aaa;white-space:pre;line-height:1.2;">xx</div>
<div style="position:absolute;left:332.60px;top:345.80px;font-family:'DejaVu Sans','Liberation Sans',sans-serif;font-size:19.2px;font-weight:bold;color:#fff;white-space:pre;line-height:1.2;letter-spacing:-0.104px;">Køretøj</div>
<div style="position:absolute;left:748.20px;top:345.80px;font-family:'DejaVu Sans','Liberation Sans',sans-serif;font-size:19.2px;font-weight:bold;color:#fff;white-space:pre;line-height:1.2;letter-spacing:0.050px;">fra dato (km)</div>
<div style="position:absolute;left:1448.60px;top:345.80px;font-family:'DejaVu Sans','Liberation Sans',sans-serif;font-size:19.2px;font-weight:bold;color:#fff;white-space:pre;line-height:1.2;letter-spacing:0.066px;">Til dato (km)</div>
<div style="position:absolute;left:2157.80px;top:345.80px;font-family:'DejaVu Sans','Liberation Sans',sans-serif;font-size:19.2px;font-weight:bold;color:#fff;white-space:pre;line-height:1.2;letter-spacing:0.218px;">Total km</div>
<div style="position:absolute;left:332.60px;top:391.10px;font-family:'DejaVu Sans','Liberation Sans',sans-serif;font-size:19.2px;font-weight:normal;color:#000;white-space:pre;line-height:1.2;letter-spacing:-0.093px;">Vogn 15,</div>
<div style="position:absolute;left:424.30px;top:391.10px;font-family:'DejaVu Sans','Liberation Sans',sans-serif;font-size:19.2px;font-weight:normal;color:#777;white-space:pre;line-height:1.2;transform:scaleX(0.9497);transform-origin:0 0;">AW</div>
<div style="position:absolute;left:748.20px;top:391.10px;font-family:'DejaVu Sans','Liberation Sans',sans-serif;font-size:19.2px;font-weight:normal;color:#000;white-space:pre;line-height:1.2;letter-spacing:0.147px;">fra d. 1. marts 2019 (100405 km)</div>
<div style="position:absolute;left:1448.60px;top:391.10px;font-family:'DejaVu Sans','Liberation Sans',sans-serif;font-size:19.2px;font-weight:normal;color:#000;white-space:pre;line-height:1.2;letter-spacing:0.137px;">til d. 29. marts 2019 (105158 km)</div>
<div style="position:absolute;left:2157.80px;top:391.10px;font-family:'DejaVu Sans','Liberation Sans',sans-serif;font-size:19.2px;font-weight:normal;color:#000;white-space:pre;line-height:1.2;letter-spacing:0.042px;">Total 4753 km</div>
<div style="position:absolute;left:332.60px;top:436.10px;font-family:'DejaVu Sans','Liberation Sans',sans-serif;font-size:19.2px;font-weight:normal;color:#000;white-space:pre;line-height:1.2;letter-spacing:-0.093px;">Vogn 33,</div>
<div style="position:absolute;left:424.30px;top:436.10px;font-family:'DejaVu Sans','Liberation Sans',sans-serif;font-size:19.2px;font-weight:normal;color:#777;white-space:pre;line-height:1.2;transform:scaleX(0.9063);transform-origin:0 0;">CE1</div>
<div style="position:absolute;left:748.20px;top:436.10px;font-family:'DejaVu Sans','Liberation Sans',sans-serif;font-size:19.2px;font-weight:normal;color:#000;white-space:pre;line-height:1.2;letter-spacing:0.145px;">fra d. 23. marts 2019 (9981 km)</div>
<div style="position:absolute;left:1448.60px;top:436.10px;font-family:'DejaVu Sans','Liberation Sans',sans-serif;font-size:19.2px;font-weight:normal;color:#000;white-space:pre;line-height:1.2;letter-spacing:0.144px;">til d. 23. marts 2019 (10043 km)</div>
<div style="position:absolute;left:2157.80px;top:436.10px;font-family:'DejaVu Sans','Liberation Sans',sans-serif;font-size:19.2px;font-weight:normal;color:#000;white-space:pre;line-height:1.2;letter-spacing:0.088px;">Total 62 km</div>
<div style="position:absolute;left:15.00px;top:543.00px;font-family:'Liberation Sans','DejaVu Sans',sans-serif;font-size:23.4px;font-weight:normal;color:#222;white-space:pre;line-height:1.2;letter-spacing:-0.085px;">Fredag, d. 1 marts 2019 (uge 9)</div>
<div style="position:absolute;left:14.80px;top:916.00px;font-family:'DejaVu Sans','Liberation Sans',sans-serif;font-size:19.2px;font-weight:normal;color:#000;white-space:pre;line-height:1.2;letter-spacing:-0.219px;">Periode opsummering</div>
<div style="position:absolute;left:633.20px;top:916.00px;font-family:'DejaVu Sans','Liberation Sans',sans-serif;font-size:19.2px;font-weight:normal;color:#000;white-space:pre;line-height:1.2;letter-spacing:0.185px;">fra d. 01.03.2019 04:13</div>
<div style="position:absolute;left:1252.80px;top:916.00px;font-family:'DejaVu Sans','Liberation Sans',sans-serif;font-size:19.2px;font-weight:normal;color:#000;white-space:pre;line-height:1.2;letter-spacing:0.160px;">til d. 01.03.2019 15:13</div>
<div style="position:absolute;left:1871.80px;top:916.00px;font-family:'DejaVu Sans','Liberation Sans',sans-serif;font-size:19.2px;font-weight:normal;color:#000;white-space:pre;line-height:1.2;letter-spacing:0.003px;">Rådighedstid 11:00</div>
<div style="position:absolute;left:51.52px;top:953.70px;font-family:'DejaVu Sans','Liberation Sans',sans-serif;font-size:19.2px;font-weight:normal;color:#000;white-space:pre;line-height:1.2;letter-spacing:0.376px;">06:06</div>
<div style="position:absolute;left:155.52px;top:953.70px;font-family:'DejaVu Sans','Liberation Sans',sans-serif;font-size:19.2px;font-weight:normal;color:#000;white-space:pre;line-height:1.2;letter-spacing:0.376px;">04:04</div>
<div style="position:absolute;left:259.52px;top:953.70px;font-family:'DejaVu Sans','Liberation Sans',sans-serif;font-size:19.2px;font-weight:normal;color:#000;white-space:pre;line-height:1.2;letter-spacing:0.376px;">00:00</div>
<div style="position:absolute;left:363.52px;top:953.70px;font-family:'DejaVu Sans','Liberation Sans',sans-serif;font-size:19.2px;font-weight:normal;color:#000;white-space:pre;line-height:1.2;letter-spacing:0.376px;">00:50</div>
<div style="position:absolute;left:481.52px;top:953.70px;font-family:'DejaVu Sans','Liberation Sans',sans-serif;font-size:19.2px;font-weight:normal;color:#000;white-space:pre;line-height:1.2;letter-spacing:0.376px;">10:10</div>
<div style="position:absolute;left:592.29px;top:953.70px;font-family:'DejaVu Sans','Liberation Sans',sans-serif;font-size:19.2px;font-weight:normal;color:#000;white-space:pre;line-height:1.2;letter-spacing:0.414px;">0.0%</div>
<div style="position:absolute;left:558.00px;top:962.00px;font-family:'DejaVu Sans Condensed','Liberation Sans',sans-serif;font-size:8px;font-weight:normal;color:#666;white-space:pre;line-height:1.2;transform:scaleX(0.9264);transform-origin:0 0;">OUT</div>
<div style="position:absolute;left:114.60px;top:1033.60px;font-family:'Liberation Sans','DejaVu Sans',sans-serif;font-size:23.5px;font-weight:normal;color:#111;white-space:pre;line-height:1.2;transform:scaleX(0.8582);transform-origin:0 0;">OVERTRÆDELSE</div>
<div style="position:absolute;left:114.80px;top:1069.80px;font-family:'Liberation Sans','DejaVu Sans',sans-serif;font-size:20.4px;font-weight:normal;color:#222;white-space:pre;line-height:1.2;letter-spacing:-0.325px;">Uafbrudt køretid (Pausereglen)</div>
<div style="position:absolute;left:114.80px;top:1100.80px;font-family:'DejaVu Sans','Liberation Sans',sans-serif;font-size:19.2px;font-weight:normal;color:#000;white-space:pre;line-height:1.2;letter-spacing:0.094px;">Ikke holdt pause efter en køretid på 04:30 timer. Køretid: 04:32 timer. Overskridelse: 00:02 timer.</div>
<div style="position:absolute;left:117.40px;top:1131.20px;font-family:'DejaVu Sans','Liberation Sans',sans-serif;font-size:9.75px;font-weight:normal;color:#000;white-space:pre;line-height:1.2;-webkit-text-stroke:0.22px #000;transform:scaleX(1.0492);transform-origin:0 0;">Start</div>
<div style="position:absolute;left:146.30px;top:1131.20px;font-family:'DejaVu Sans','Liberation Sans',sans-serif;font-size:9.75px;font-weight:normal;color:#000;white-space:pre;line-height:1.2;-webkit-text-stroke:0.22px #000;transform:scaleX(1.0482);transform-origin:0 0;">fredag d. 1. marts 2019 kl. 04:13</div>
<div style="position:absolute;left:117.40px;top:1150.00px;font-family:'DejaVu Sans','Liberation Sans',sans-serif;font-size:9.75px;font-weight:normal;color:#000;white-space:pre;line-height:1.2;-webkit-text-stroke:0.22px #000;transform:scaleX(1.0684);transform-origin:0 0;">Slut</div>
<div style="position:absolute;left:146.30px;top:1150.00px;font-family:'DejaVu Sans','Liberation Sans',sans-serif;font-size:9.75px;font-weight:normal;color:#000;white-space:pre;line-height:1.2;-webkit-text-stroke:0.22px #000;transform:scaleX(1.0470);transform-origin:0 0;">fredag d. 1. marts 2019 kl. 11:41</div>
</body></html>
